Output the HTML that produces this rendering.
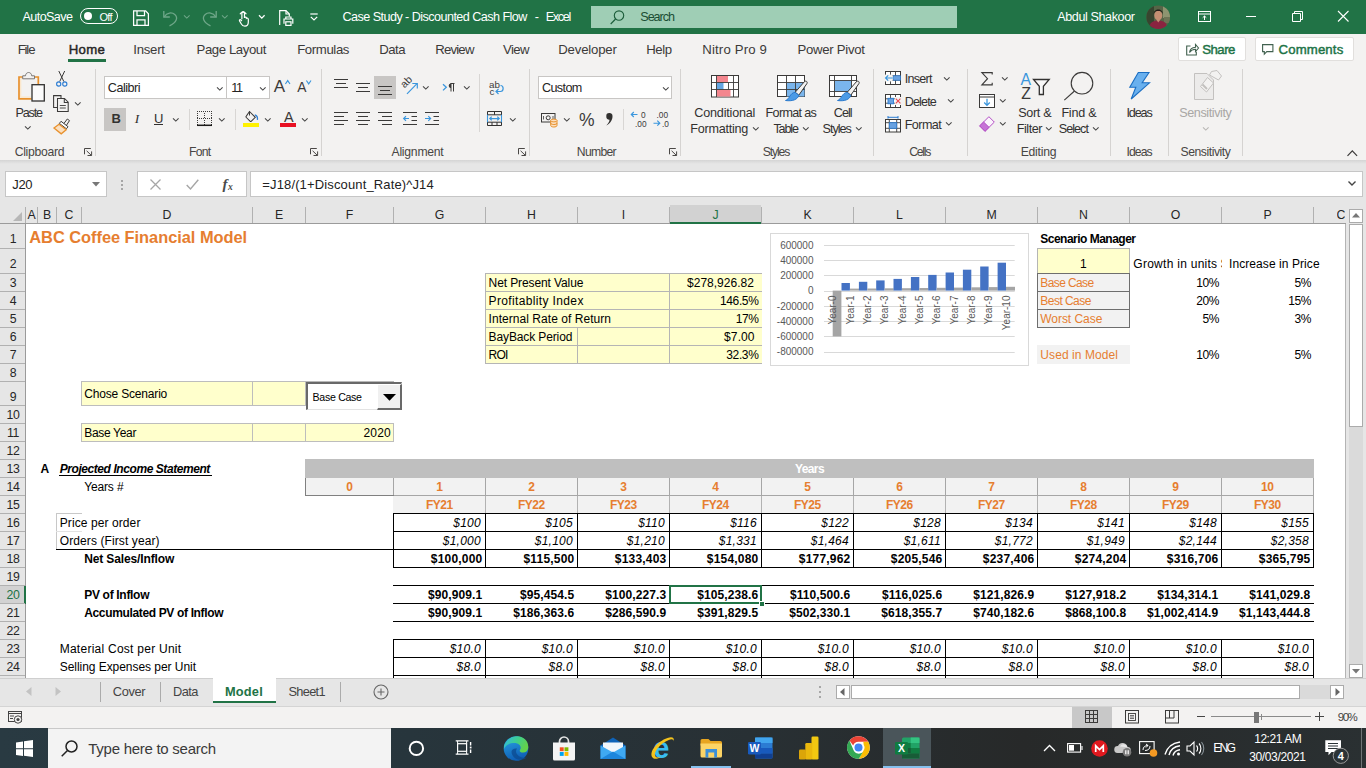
<!DOCTYPE html>
<html><head><meta charset="utf-8"><title>Excel</title>
<style>
*{box-sizing:border-box;margin:0;padding:0}
html,body{width:1366px;height:768px;overflow:hidden;background:#fff;font-family:"Liberation Sans",sans-serif;}
body{position:relative;font-size:12px;color:#252423}
.abs,.t{position:absolute}
.t{white-space:pre;line-height:1}
svg{position:absolute;overflow:visible}
/* title bar */
#title{position:absolute;left:0;top:0;width:1366px;height:34px;background:#217346;color:#fff}
#tabs{position:absolute;left:0;top:34px;width:1366px;height:31px;background:#f3f2f1}
#ribbon{position:absolute;left:0;top:65px;width:1366px;height:95px;background:#f3f2f1}
#ribshadow{position:absolute;left:0;top:160px;width:1366px;height:4px;background:linear-gradient(#d4d4d4,#e6e6e6)}
#fbar{position:absolute;left:0;top:164px;width:1366px;height:43px;background:#e6e6e6}
.tab{position:absolute;top:8px;font-size:13px;color:#3b3a39;white-space:pre;line-height:16px}
.rl{position:absolute;font-size:12.5px;color:#323130;white-space:pre;line-height:16px;text-align:center}
.gl{position:absolute;top:80px;font-size:12px;color:#444;white-space:pre;line-height:14px;text-align:center}
.sep{position:absolute;top:4px;width:1px;height:86px;background:#d2d0ce}
.chev{position:absolute;width:5px;height:5px;border-right:1.2px solid #444;border-bottom:1.2px solid #444;transform:rotate(45deg)}
</style></head><body>
<div id="title"></div>
<span class="t" style="left:22.50px;top:11.00px;font-size:12.6px;color:#fff;letter-spacing:-0.591px;">AutoSave</span>
<div class="abs" style="left:80px;top:8px;width:38px;height:16px;background:transparent;border:1px solid #fff;border-radius:8px"></div>
<div class="abs" style="left:84px;top:12px;width:8px;height:8px;background:#fff;border-radius:4px"></div>
<span class="t" style="left:99.50px;top:12.00px;font-size:11px;color:#fff;letter-spacing:-0.749px;">Off</span>
<svg style="left:133px;top:10px" width="16" height="16" viewBox="0 0 16 16" fill="none" stroke="#fff" stroke-width="1.25"><path d="M.6.900h12l2.800 2.800v11.700H.6z"/><path d="M4 .9v4.600h7.500V.9"/><path d="M4 15.400V9.800h8v5.600"/></svg>
<svg style="left:163px;top:10px" width="15" height="16" viewBox="0 0 15 16" fill="none" stroke="#6fa789" stroke-width="1.3"><path d="M.8 1v6h6"/><path d="M1.200 6.800C4 2.300 9 2 11.800 4.500c3.400 3 2 8-5.300 11.300"/></svg>
<svg style="left:183.7px;top:14.9px" width="5.6" height="3.8" viewBox="0 0 5.6 3.8" fill="none" stroke="#6fa789" stroke-width="1.05"><path d="M0 .3l2.8 2.8 2.8 -2.8"/></svg>
<svg style="left:201.5px;top:10px" width="15" height="16" viewBox="0 0 15 16" fill="none" stroke="#6fa789" stroke-width="1.3"><path d="M14.200 1v6h-6"/><path d="M13.800 6.800C11 2.300 6 2 3.200 4.500-.2 7.500 1.200 12.500 8.500 15.800"/></svg>
<svg style="left:221.7px;top:14.9px" width="5.6" height="3.8" viewBox="0 0 5.6 3.8" fill="none" stroke="#6fa789" stroke-width="1.05"><path d="M0 .3l2.8 2.8 2.8 -2.8"/></svg>
<svg style="left:237.5px;top:10px" width="13" height="17" viewBox="0 0 13 17" fill="none" stroke="#fff" stroke-width="1.4"><g transform="scale(.86 .89)"><path d="M4.500 10.500V3.200a1.500 1.500 0 013 0V9"/><path d="M7.500 8.300c1-.8 2.300-.2 2.300 1 1-.6 2.200 0 2.200 1.100v3.100c0 3-1.500 4.700-4 4.700-2.400 0-3.300-1-4.300-2.800L1.800 12.300c-.6-1.100.7-2 1.600-1.100l1.100 1.300"/><path d="M2.300 4.800a4 4 0 017.400 0"/></g></svg>
<svg style="left:258.6px;top:14.9px" width="5.6" height="3.8" viewBox="0 0 5.6 3.8" fill="none" stroke="#fff" stroke-width="1.3"><path d="M0 .3l2.8 2.8 2.8 -2.8"/></svg>
<svg style="left:279px;top:10px" width="15" height="16" viewBox="0 0 15 16" fill="none" stroke="#fff" stroke-width="1.2"><path d="M.7 15V.7h6.300l3.300 3.300v2.500"/><path d="M7 .7v3.300h3.300"/><path d="M5 13.800V9h8.800v4.800"/><path d="M6.800 9V7h5.200v2"/><rect x="6.800" y="11.800" width="5.200" height="3.600" fill="#217346"/></svg>
<svg style="left:309.5px;top:13px" width="8" height="8" viewBox="0 0 8 8" fill="none" stroke="#fff" stroke-width="1.2"><path d="M.3 1h7.400"/><path d="M.8 3.800l3.200 3.200 3.200-3.200"/></svg>
<span class="t" style="left:342.50px;top:11.00px;font-size:12.6px;color:#fff;letter-spacing:-0.544px;">Case Study - Discounted Cash Flow</span>
<span class="t" style="left:534.80px;top:11.00px;font-size:12.6px;color:#fff;">-</span>
<span class="t" style="left:545.80px;top:11.00px;font-size:12.6px;color:#fff;letter-spacing:-1.327px;">Excel</span>
<div class="abs" style="left:591px;top:6px;width:366px;height:22px;background:#9fceb5;"></div>
<svg style="left:609.8px;top:10px" width="15" height="15" viewBox="0 0 15 15" fill="none" stroke="#1d5e3b" stroke-width="1.15"><circle cx="9" cy="5.500" r="4.700"/><path d="M5.600 9L.7 14"/></svg>
<span class="t" style="left:640.30px;top:11.00px;font-size:12.6px;color:#1b4d33;letter-spacing:-1.043px;">Search</span>
<span class="t" style="left:1057.30px;top:11.00px;font-size:12.6px;color:#fff;letter-spacing:-0.413px;">Abdul Shakoor</span>
<svg style="left:1146px;top:4.5px" width="25" height="25" viewBox="0 0 25 25" ><defs><clipPath id="av"><circle cx="12.200" cy="12.200" r="11.800"/></clipPath></defs><g clip-path="url(#av)"><rect width="25" height="25" fill="#566547"/><rect x="0" y="0" width="8" height="25" fill="#37452f"/><rect x="17" y="0" width="8" height="13" fill="#8d9470"/><rect x="18" y="12" width="7" height="6" fill="#6c7455"/><ellipse cx="12.300" cy="10.500" rx="4" ry="4.800" fill="#c48e72"/><path d="M7.800 9c-.5-6 9.500-6 9 0-1-2.500-2-3-4.500-3S8.800 6.500 7.800 9z" fill="#241c18"/><path d="M3 25c0-7.500 4-9.500 9.300-9.500S21.500 17.500 21.500 25z" fill="#8a2440"/><path d="M10.500 15l1.800 2.500 1.800-2.500z" fill="#c48e72"/></g></svg>
<svg style="left:1198px;top:11px" width="13" height="11" viewBox="0 0 13 11" fill="none" stroke="#fff" stroke-width="1"><rect x=".5" y=".5" width="12" height="10"/><path d="M.5 3h12"/><path d="M6.500 9V5M4.700 6.700L6.500 5l1.800 1.700"/></svg>
<div class="abs" style="left:1246px;top:16px;width:10px;height:1px;background:#fff;"></div>
<svg style="left:1291.5px;top:10.5px" width="11" height="11" viewBox="0 0 11 11" fill="none" stroke="#fff" stroke-width="1"><path d="M.5 2.500h8v8h-8z"/><path d="M2.500 2.500v-2h8v8h-2"/></svg>
<svg style="left:1337.5px;top:11px" width="11" height="11" viewBox="0 0 11 11" fill="none" stroke="#fff" stroke-width="1.1"><path d="M0 0l10.500 10.500M10.500 0L0 10.500"/></svg>
<div id="tabs"></div>
<span class="t" style="left:17.70px;top:43.00px;font-size:13.2px;color:#3b3a39;letter-spacing:-1.155px;">File</span>
<span class="t" style="left:68.70px;top:43.00px;font-size:13.2px;color:#262626;letter-spacing:0.294px;-webkit-text-stroke:0.45px #262626;">Home</span>
<div class="abs" style="left:68px;top:59px;width:38px;height:3px;background:#217346;"></div>
<span class="t" style="left:133.30px;top:43.00px;font-size:13.2px;color:#3b3a39;letter-spacing:-0.263px;">Insert</span>
<span class="t" style="left:196.50px;top:43.00px;font-size:13.2px;color:#3b3a39;letter-spacing:-0.413px;">Page Layout</span>
<span class="t" style="left:297.20px;top:43.00px;font-size:13.2px;color:#3b3a39;letter-spacing:-0.388px;">Formulas</span>
<span class="t" style="left:379.30px;top:43.00px;font-size:13.2px;color:#3b3a39;letter-spacing:-0.564px;">Data</span>
<span class="t" style="left:435.20px;top:43.00px;font-size:13.2px;color:#3b3a39;letter-spacing:-0.804px;">Review</span>
<span class="t" style="left:503.00px;top:43.00px;font-size:13.2px;color:#3b3a39;letter-spacing:-0.635px;">View</span>
<span class="t" style="left:558.20px;top:43.00px;font-size:13.2px;color:#3b3a39;letter-spacing:-0.171px;">Developer</span>
<span class="t" style="left:646.30px;top:43.00px;font-size:13.2px;color:#3b3a39;letter-spacing:-0.484px;">Help</span>
<span class="t" style="left:702.20px;top:43.00px;font-size:13.2px;color:#3b3a39;letter-spacing:0.172px;">Nitro Pro 9</span>
<span class="t" style="left:797.60px;top:43.00px;font-size:13.2px;color:#3b3a39;letter-spacing:-0.302px;">Power Pivot</span>
<div class="abs" style="left:1178px;top:37px;width:68px;height:24px;background:#fff;border:1px solid #e1dfdd;border-radius:2px"></div>
<svg style="left:1185.5px;top:43px" width="13" height="13" viewBox="0 0 13 13" fill="none" stroke="#41614f" stroke-width="1.1"><path d="M4.500 3H.7v9h9.600V8.800"/><path d="M3.500 9.500c.5-3.200 2.500-5 6-5.200V1.500L12.500 5 9.500 8.500V6.200C7 6.300 5 7.200 3.500 9.500z"/></svg>
<span class="t" style="left:1202.20px;top:43.00px;font-size:13.2px;color:#217346;letter-spacing:-0.504px;-webkit-text-stroke:0.45px #217346;">Share</span>
<div class="abs" style="left:1255px;top:37px;width:99px;height:24px;background:#fff;border:1px solid #e1dfdd;border-radius:2px"></div>
<svg style="left:1262px;top:44px" width="12" height="11" viewBox="0 0 12 11" fill="none" stroke="#41614f" stroke-width="1.1"><path d="M.6.600h10.300v7H4.800L2.300 10.200V7.600H.6z"/></svg>
<span class="t" style="left:1278.50px;top:43.00px;font-size:13.2px;color:#217346;letter-spacing:0.140px;-webkit-text-stroke:0.45px #217346;">Comments</span>
<div id="ribbon"></div><div id="ribshadow"></div>
<svg style="left:17px;top:70px" width="30" height="33" viewBox="0 0 30 33" fill="none"><path d="M6 7H2v21.800h12.500" stroke="#e8912d" stroke-width="1.700"/><path d="M17 7h4.300v7" stroke="#e8912d" stroke-width="1.700"/><path d="M6 8.700H3.700v18.400h10.800" stroke="#fce6c8" stroke-width="1.200"/>
<path d="M5.700 8.800V5.800h2.800c.3-4.400 5.900-4.400 6.200 0h2.800v3z" fill="#f3f2f1" stroke="#797775" stroke-width="1"/>
<rect x="15" y="14.700" width="12.300" height="16.300" fill="#fbfbfb" stroke="#323130" stroke-width="1.300"/></svg>
<span class="t" style="left:15.60px;top:107.00px;font-size:12.6px;color:#323130;letter-spacing:-1.205px;">Paste</span>
<svg style="left:25.2px;top:126.4px" width="5.6" height="3.8" viewBox="0 0 5.6 3.8" fill="none" stroke="#444" stroke-width="1.05"><path d="M0 .3l2.8 2.8 2.8 -2.8"/></svg>
<svg style="left:55.5px;top:71px" width="12" height="17" viewBox="0 0 12 17" fill="none"><path d="M2.800 0l5 10.500M8.700 0L3.700 10.500" stroke="#3b3a39" stroke-width="1"/><circle cx="2.700" cy="13" r="2.100" stroke="#2b7cd3" stroke-width="1.100"/><circle cx="8.800" cy="13" r="2.100" stroke="#2b7cd3" stroke-width="1.100"/></svg>
<svg style="left:53px;top:95px" width="17" height="17" viewBox="0 0 17 17" fill="none" stroke="#3b3a39" stroke-width="1.05"><path d="M4.500 12.500H.6V.6h7.400v2.500"/><path d="M4.500 3.500h7l3.700 3.700v9.200H4.500z" fill="#f3f2f1"/><path d="M11.300 3.700v3.800h3.800"/><path d="M6.800 10.500h6M6.800 13h6" stroke-width=".9"/></svg>
<svg style="left:75.4px;top:101.6px" width="5.6" height="3.8" viewBox="0 0 5.6 3.8" fill="none" stroke="#444" stroke-width="1.05"><path d="M0 .3l2.8 2.8 2.8 -2.8"/></svg>
<svg style="left:53px;top:118px" width="18" height="17" viewBox="0 0 18 17" fill="none"><path d="M10.500 6L14.300 1l2.200 1.600-3.500 5.400" stroke="#3b3a39" stroke-width="1" fill="#f3f2f1"/><path d="M8 3.300l7 5.400-1.600 2.100-7-5.400z" fill="#fff" stroke="#3b3a39" stroke-width="1"/><path d="M6 6.300l7.200 5.500-5 4L1 10z" fill="#fbe0c0" stroke="#e8912d" stroke-width="1.300"/></svg>
<span class="t" style="left:14.70px;top:146.00px;font-size:12.2px;color:#484644;letter-spacing:-0.302px;">Clipboard</span>
<svg style="left:84px;top:148px" width="8" height="8" viewBox="0 0 8 8" fill="none" stroke="#4a4846" stroke-width="1"><path d="M.5 6.300V.5h6.300"/><path d="M2.600 2.800l4.800 4.600M3.500 7.500h4.100V3.400"/></svg>
<div class="abs" style="left:95px;top:69px;width:1px;height:87px;background:#d5d3d1;"></div>
<div class="abs" style="left:104px;top:76px;width:123px;height:23px;background:#fff;border:1px solid #c8c6c4"></div>
<span class="t" style="left:107.80px;top:82.00px;font-size:12.6px;color:#252423;letter-spacing:-0.501px;">Calibri</span>
<svg style="left:217.2px;top:86.6px" width="5.6" height="3.8" viewBox="0 0 5.6 3.8" fill="none" stroke="#444" stroke-width="1.05"><path d="M0 .3l2.8 2.8 2.8 -2.8"/></svg>
<div class="abs" style="left:226px;top:76px;width:44px;height:23px;background:#fff;border:1px solid #c8c6c4"></div>
<span class="t" style="left:231.30px;top:82.00px;font-size:12.6px;color:#252423;letter-spacing:-1.300px;">11</span>
<svg style="left:259.7px;top:86.6px" width="5.6" height="3.8" viewBox="0 0 5.6 3.8" fill="none" stroke="#444" stroke-width="1.05"><path d="M0 .3l2.8 2.8 2.8 -2.8"/></svg>
<span class="t" style="left:273.80px;top:78.00px;font-size:17px;color:#3b3a39;">A</span>
<svg style="left:284.5px;top:79.5px" width="6" height="4.5" viewBox="0 0 6 4.5" fill="none" stroke="#3a96dd" stroke-width="1.1"><path d="M.4 4L2.700.6 5 4"/></svg>
<span class="t" style="left:297.20px;top:81.00px;font-size:13.8px;color:#3b3a39;">A</span>
<svg style="left:305.5px;top:80px" width="6" height="4.5" viewBox="0 0 6 4.5" fill="none" stroke="#3a96dd" stroke-width="1.1"><path d="M.4.500L2.700 3.900 5 .5"/></svg>
<div class="abs" style="left:104px;top:108px;width:22px;height:23px;background:#c8c6c4;"></div>
<span class="t" style="left:111.40px;top:112.00px;font-size:13px;color:#323130;font-weight:700;">B</span>
<span class="t" style="left:134.65px;top:112.00px;font-size:13.5px;color:#323130;font-style:italic;font-family:'Liberation Serif',serif;">I</span>
<span class="t" style="left:154.00px;top:112.00px;font-size:13px;color:#323130;">U</span>
<div class="abs" style="left:154px;top:124px;width:9px;height:1px;background:#323130;"></div>
<svg style="left:173.4px;top:117.6px" width="5.6" height="3.8" viewBox="0 0 5.6 3.8" fill="none" stroke="#444" stroke-width="1.05"><path d="M0 .3l2.8 2.8 2.8 -2.8"/></svg>
<div class="abs" style="left:189px;top:109px;width:1px;height:21px;background:#d8d6d4;"></div>
<svg style="left:197px;top:111px" width="16" height="16" viewBox="0 0 16 16" fill="none"><g fill="#3b3a39" stroke="none"><rect x="0" y="0" width="1" height="1"/><rect x="0" y="7" width="1" height="1"/><rect x="2" y="0" width="1" height="1"/><rect x="2" y="7" width="1" height="1"/><rect x="4" y="0" width="1" height="1"/><rect x="4" y="7" width="1" height="1"/><rect x="6" y="0" width="1" height="1"/><rect x="6" y="7" width="1" height="1"/><rect x="8" y="0" width="1" height="1"/><rect x="8" y="7" width="1" height="1"/><rect x="10" y="0" width="1" height="1"/><rect x="10" y="7" width="1" height="1"/><rect x="12" y="0" width="1" height="1"/><rect x="12" y="7" width="1" height="1"/><rect x="14" y="0" width="1" height="1"/><rect x="14" y="7" width="1" height="1"/><rect x="0" y="2" width="1" height="1"/><rect x="7" y="2" width="1" height="1"/><rect x="14" y="2" width="1" height="1"/><rect x="0" y="4" width="1" height="1"/><rect x="7" y="4" width="1" height="1"/><rect x="14" y="4" width="1" height="1"/><rect x="0" y="6" width="1" height="1"/><rect x="7" y="6" width="1" height="1"/><rect x="14" y="6" width="1" height="1"/><rect x="0" y="9" width="1" height="1"/><rect x="7" y="9" width="1" height="1"/><rect x="14" y="9" width="1" height="1"/><rect x="0" y="11" width="1" height="1"/><rect x="7" y="11" width="1" height="1"/><rect x="14" y="11" width="1" height="1"/><rect x="0" y="13" width="1" height="1"/><rect x="7" y="13" width="1" height="1"/><rect x="14" y="13" width="1" height="1"/></g><path d="M0 14.300h15" stroke="#1b1a19" stroke-width="1.500"/></svg>
<svg style="left:219.2px;top:117.6px" width="5.6" height="3.8" viewBox="0 0 5.6 3.8" fill="none" stroke="#444" stroke-width="1.05"><path d="M0 .3l2.8 2.8 2.8 -2.8"/></svg>
<div class="abs" style="left:235px;top:109px;width:1px;height:21px;background:#d8d6d4;"></div>
<svg style="left:244px;top:110px" width="15" height="12" viewBox="0 0 15 12" fill="none"><path d="M5.500 1.500l5.800 5.800-3.900 3.900a1 1 0 01-1.400 0L2.300 7.500a1 1 0 010-1.400z" stroke="#3b3a39" stroke-width="1.050" fill="#f3f2f1"/><path d="M5.500 1.500v4" stroke="#3b3a39"/><path d="M10.800 4.800c2 .6 3 2.500 2.600 5" stroke="#2b7cd3" stroke-width="1.300"/></svg>
<div class="abs" style="left:243px;top:123px;width:16px;height:4px;background:#fff100;"></div>
<svg style="left:265.2px;top:117.6px" width="5.6" height="3.8" viewBox="0 0 5.6 3.8" fill="none" stroke="#444" stroke-width="1.05"><path d="M0 .3l2.8 2.8 2.8 -2.8"/></svg>
<span class="t" style="left:283.90px;top:110.00px;font-size:14.4px;color:#3b3a39;">A</span>
<div class="abs" style="left:280px;top:123px;width:16px;height:4px;background:#e81123;"></div>
<svg style="left:302.2px;top:117.6px" width="5.6" height="3.8" viewBox="0 0 5.6 3.8" fill="none" stroke="#444" stroke-width="1.05"><path d="M0 .3l2.8 2.8 2.8 -2.8"/></svg>
<span class="t" style="left:188.90px;top:146.00px;font-size:12.2px;color:#484644;letter-spacing:-0.704px;">Font</span>
<svg style="left:309.5px;top:148px" width="8" height="8" viewBox="0 0 8 8" fill="none" stroke="#4a4846" stroke-width="1"><path d="M.5 6.300V.5h6.300"/><path d="M2.600 2.800l4.800 4.600M3.500 7.500h4.100V3.400"/></svg>
<div class="abs" style="left:321px;top:69px;width:1px;height:87px;background:#d5d3d1;"></div>
<svg style="left:334px;top:79px" width="16" height="12" viewBox="0 0 16 12" fill="none" stroke="#3b3a39" stroke-width="1"><path d="M0 0.5h14"/><path d="M2 4.5h10"/><path d="M0 8.5h14"/></svg>
<svg style="left:356px;top:83px" width="16" height="12" viewBox="0 0 16 12" fill="none" stroke="#3b3a39" stroke-width="1"><path d="M0 0.5h14"/><path d="M2 4.5h10"/><path d="M0 8.5h14"/></svg>
<div class="abs" style="left:374px;top:76px;width:22px;height:23px;background:#c8c6c4;"></div>
<svg style="left:378px;top:86px" width="16" height="12" viewBox="0 0 16 12" fill="none" stroke="#3b3a39" stroke-width="1"><path d="M0 0.5h14"/><path d="M2 4.5h10"/><path d="M0 8.5h14"/></svg>
<svg style="left:400px;top:77px" width="20" height="19" viewBox="0 0 20 19" fill="none"><text x="0" y="0" font-size="10.500" font-family="Liberation Sans" fill="#3b3a39" stroke="none" transform="translate(4.500 11.500) rotate(-45)">ab</text><path d="M7 16.800L17 6.700" stroke="#3a96dd" stroke-width="1.150"/><path d="M12.300 6.500h5v5" stroke="#3a96dd" stroke-width="1.150"/></svg>
<svg style="left:422.8px;top:86.1px" width="5.6" height="3.8" viewBox="0 0 5.6 3.8" fill="none" stroke="#444" stroke-width="1.05"><path d="M0 .3l2.8 2.8 2.8 -2.8"/></svg>
<svg style="left:442px;top:83px" width="14" height="9" viewBox="0 0 14 9" ><path d="M1 1.200l3.300 3.100L1 7.400" stroke="#3a96dd" stroke-width="1.300" fill="none"/><path d="M9 .5v8M11.500 .5v8M12.500 .5H8.500" stroke="#3b3a39" stroke-width="1" fill="none"/><path d="M9 .5h-.5a2.300 2.300 0 000 4.500H9z" fill="#3b3a39" stroke="none"/></svg>
<svg style="left:463.6px;top:86.1px" width="5.6" height="3.8" viewBox="0 0 5.6 3.8" fill="none" stroke="#444" stroke-width="1.05"><path d="M0 .3l2.8 2.8 2.8 -2.8"/></svg>
<div class="abs" style="left:479px;top:74px;width:1px;height:58px;background:#d8d6d4;"></div>
<svg style="left:488px;top:79px" width="17" height="17" viewBox="0 0 17 17" fill="none"><text x="1" y="8.500" font-size="9.800" font-family="Liberation Sans" fill="#3b3a39" stroke="none">ab</text><text x="1.500" y="15.500" font-size="9.800" font-family="Liberation Sans" fill="#3b3a39" stroke="none">c</text><path d="M12.500 6.500c3.500 0 3.500 6 0 6H8.500" stroke="#3a96dd" stroke-width="1.200"/><path d="M10.500 10l-2.500 2.500 2.500 2.500" stroke="#3a96dd" stroke-width="1.200"/></svg>
<svg style="left:334px;top:112px" width="16" height="16" viewBox="0 0 16 16" fill="none" stroke="#3b3a39" stroke-width="1"><path d="M0 0.5h14"/><path d="M0 4.5h10"/><path d="M0 8.5h14"/><path d="M0 12.5h10"/></svg>
<svg style="left:356px;top:112px" width="16" height="16" viewBox="0 0 16 16" fill="none" stroke="#3b3a39" stroke-width="1"><path d="M0 0.5h14"/><path d="M2 4.5h10"/><path d="M0 8.5h14"/><path d="M2 12.5h10"/></svg>
<svg style="left:378px;top:112px" width="16" height="16" viewBox="0 0 16 16" fill="none" stroke="#3b3a39" stroke-width="1"><path d="M0 0.5h14"/><path d="M4 4.5h10"/><path d="M0 8.5h14"/><path d="M4 12.5h10"/></svg>
<svg style="left:403px;top:112px" width="15" height="13" viewBox="0 0 15 13" fill="none"><path d="M0 .5h14M8.500 4.500h5.500M8.500 8.500h5.500M0 12.500h14" stroke="#3b3a39"/><path d="M6 6.500H.8M3 4.200L.7 6.500 3 8.800" stroke="#3a96dd" stroke-width="1.200"/></svg>
<svg style="left:425px;top:112px" width="15" height="13" viewBox="0 0 15 13" fill="none"><path d="M0 .5h14M8.500 4.500h5.500M8.500 8.500h5.500M0 12.500h14" stroke="#3b3a39"/><path d="M0 6.500h5.500M3.300 4.200l2.300 2.300-2.300 2.300" stroke="#3a96dd" stroke-width="1.200"/></svg>
<svg style="left:487px;top:111px" width="16" height="15" viewBox="0 0 16 15" fill="none"><path d="M.5.500h14v14H.5z" stroke="#323130"/><path d="M.5 3.800h14M.5 11.200h14M7.500.5v3.300M5 11.200v3.300M10 11.200v3.300" stroke="#323130"/><path d="M.5 3.800v7.400M14.500 3.800v7.400" stroke="#3a96dd" stroke-width="1.100"/><path d="M2.800 7.500h9.400M4.700 5.600L2.800 7.500l1.900 1.900M10.300 5.600l1.900 1.900-1.900 1.900" stroke="#3a96dd" stroke-width="1.250"/></svg>
<svg style="left:509.6px;top:117.6px" width="5.6" height="3.8" viewBox="0 0 5.6 3.8" fill="none" stroke="#444" stroke-width="1.05"><path d="M0 .3l2.8 2.8 2.8 -2.8"/></svg>
<span class="t" style="left:391.50px;top:146.00px;font-size:12.2px;color:#484644;letter-spacing:-0.244px;">Alignment</span>
<svg style="left:518px;top:148px" width="8" height="8" viewBox="0 0 8 8" fill="none" stroke="#4a4846" stroke-width="1"><path d="M.5 6.300V.5h6.300"/><path d="M2.600 2.800l4.800 4.600M3.500 7.500h4.100V3.400"/></svg>
<div class="abs" style="left:529px;top:69px;width:1px;height:87px;background:#d5d3d1;"></div>
<div class="abs" style="left:538px;top:76px;width:134px;height:23px;background:#fff;border:1px solid #c8c6c4"></div>
<span class="t" style="left:541.90px;top:82.00px;font-size:12.6px;color:#252423;letter-spacing:-0.601px;">Custom</span>
<svg style="left:662.7px;top:86.6px" width="5.6" height="3.8" viewBox="0 0 5.6 3.8" fill="none" stroke="#444" stroke-width="1.05"><path d="M0 .3l2.8 2.8 2.8 -2.8"/></svg>
<svg style="left:541px;top:113px" width="18" height="15" viewBox="0 0 18 15" fill="none"><rect x=".5" y=".5" width="13.500" height="8.500" stroke="#3b3a39"/><circle cx="7.200" cy="4.800" r="2" stroke="#3b3a39"/><path d="M2.500 3v3.500M12 3v3.500" stroke="#3b3a39" stroke-width=".8"/><path d="M9.700 7.500v5c0 2 6.300 2 6.300 0V7.500" fill="#fbe0c0" stroke="#e8912d"/><ellipse cx="12.850" cy="7.500" rx="3.150" ry="1.400" fill="#fbe0c0" stroke="#e8912d"/><path d="M9.700 10c0 2 6.300 2 6.300 0" stroke="#e8912d"/></svg>
<svg style="left:563.8px;top:117.6px" width="5.6" height="3.8" viewBox="0 0 5.6 3.8" fill="none" stroke="#444" stroke-width="1.05"><path d="M0 .3l2.8 2.8 2.8 -2.8"/></svg>
<span class="t" style="left:579.00px;top:112.00px;font-size:17.5px;color:#3b3a39;">%</span>
<svg style="left:604.5px;top:112.5px" width="9" height="13" viewBox="0 0 9 13" ><path d="M4.300 0a3 3 0 013.200 3.200C7.500 7 5.300 10.500 1.300 12.500c2-2 3.200-4 3.200-5.800A3.300 3.300 0 011.300 3.200 3 3 0 014.300 0z" fill="#323130" stroke="none"/></svg>
<div class="abs" style="left:623px;top:109px;width:1px;height:21px;background:#d8d6d4;"></div>
<svg style="left:630px;top:110px" width="18" height="18" viewBox="0 0 18 18" fill="none"><path d="M7.500 4.500H1.400M3.800 2L1.300 4.500 3.800 7" stroke="#3a96dd" stroke-width="1.150"/><text x="11" y="7.800" font-size="8.300" font-family="Liberation Sans" fill="#3b3a39" stroke="none">0</text><text x="5" y="16.500" font-size="8.300" font-family="Liberation Sans" fill="#3b3a39" stroke="none">.00</text></svg>
<svg style="left:652px;top:110px" width="18" height="18" viewBox="0 0 18 18" fill="none"><text x="4.500" y="7.800" font-size="8.300" font-family="Liberation Sans" fill="#3b3a39" stroke="none">.00</text><path d="M1.500 13.200h6.300M5.300 10.700l2.500 2.500-2.500 2.500" stroke="#3a96dd" stroke-width="1.150"/><text x="10" y="16.500" font-size="8.300" font-family="Liberation Sans" fill="#3b3a39" stroke="none">.0</text></svg>
<span class="t" style="left:576.80px;top:146.00px;font-size:12.2px;color:#484644;letter-spacing:-0.699px;">Number</span>
<svg style="left:668.5px;top:148px" width="8" height="8" viewBox="0 0 8 8" fill="none" stroke="#4a4846" stroke-width="1"><path d="M.5 6.300V.5h6.300"/><path d="M2.600 2.800l4.800 4.600M3.500 7.500h4.100V3.400"/></svg>
<div class="abs" style="left:680px;top:69px;width:1px;height:87px;background:#d5d3d1;"></div>
<svg style="left:711px;top:75px" width="29" height="23" viewBox="0 0 29 23" fill="none"><rect x=".5" y=".5" width="27" height="21.500" fill="#fff" stroke="#3b3a39"/>
<rect x="5.500" y="1" width="11.500" height="6.500" fill="#f3868e"/><rect x="5.500" y="7.500" width="7" height="7" fill="#64a5e1"/><rect x="5.500" y="14.500" width="14" height="7" fill="#f3868e"/>
<path d="M5.500.5v21.500M22.500.5v21.500M.5 7.500h27M.5 14.500h27M17.500 7.500v7" stroke="#3b3a39" stroke-width=".9"/></svg>
<span class="t" style="left:694.30px;top:107.00px;font-size:12.6px;color:#323130;letter-spacing:-0.194px;">Conditional</span>
<span class="t" style="left:690.20px;top:123.00px;font-size:12.6px;color:#323130;letter-spacing:-0.224px;">Formatting</span>
<svg style="left:752.8px;top:126.9px" width="5.6" height="3.8" viewBox="0 0 5.6 3.8" fill="none" stroke="#444" stroke-width="1.05"><path d="M0 .3l2.8 2.8 2.8 -2.8"/></svg>
<svg style="left:777px;top:75px" width="33" height="28" viewBox="0 0 33 28" fill="none"><rect x=".5" y=".5" width="27" height="21" fill="#fff" stroke="#3b3a39"/>
<rect x="9.500" y="7.500" width="18" height="14" fill="#7ab5ec"/>
<path d="M.5 7.500h27M.5 14.500h27M9.500.5v21M18.500.5v21" stroke="#3b3a39" stroke-width=".9"/><path d="M18.200 17.300l9.200-10.600c1.400-1.500 3.600.2 2.500 1.900L21.800 20.200z" fill="#f3f2f1" stroke="#3b3a39" stroke-width="1"/>
<path d="M18.200 17.300l3.600 2.900c-.8 4.300-6.300 6.300-13.300 5.300 4.200-1.300 4.300-7.700 9.700-8.200z" fill="#4a9ae6" stroke="#2274c9" stroke-width=".9"/></svg>
<span class="t" style="left:765.60px;top:107.00px;font-size:12.6px;color:#323130;letter-spacing:-0.677px;">Format as</span>
<span class="t" style="left:773.40px;top:123.00px;font-size:12.6px;color:#323130;letter-spacing:-1.132px;">Table</span>
<svg style="left:802.8px;top:126.9px" width="5.6" height="3.8" viewBox="0 0 5.6 3.8" fill="none" stroke="#444" stroke-width="1.05"><path d="M0 .3l2.8 2.8 2.8 -2.8"/></svg>
<svg style="left:829px;top:75px" width="33" height="28" viewBox="0 0 33 28" fill="none"><rect x=".5" y=".5" width="27" height="21" fill="#fff" stroke="#3b3a39"/>
<rect x="5.500" y="5.500" width="17" height="11" fill="#7ab5ec"/>
<path d="M.5 5.500h27M.5 16.500h27M5.500.5v21M22.500.5v21" stroke="#3b3a39" stroke-width=".9"/><path d="M18.200 17.300l9.200-10.600c1.400-1.500 3.600.2 2.500 1.900L21.800 20.200z" fill="#f3f2f1" stroke="#3b3a39" stroke-width="1"/>
<path d="M18.200 17.300l3.600 2.900c-.8 4.300-6.300 6.300-13.300 5.300 4.200-1.300 4.300-7.700 9.700-8.200z" fill="#4a9ae6" stroke="#2274c9" stroke-width=".9"/></svg>
<span class="t" style="left:833.80px;top:107.00px;font-size:12.6px;color:#323130;letter-spacing:-1.003px;">Cell</span>
<span class="t" style="left:822.60px;top:123.00px;font-size:12.6px;color:#323130;letter-spacing:-1.042px;">Styles</span>
<svg style="left:855.8px;top:126.9px" width="5.6" height="3.8" viewBox="0 0 5.6 3.8" fill="none" stroke="#444" stroke-width="1.05"><path d="M0 .3l2.8 2.8 2.8 -2.8"/></svg>
<span class="t" style="left:762.80px;top:146.00px;font-size:12.2px;color:#484644;letter-spacing:-1.144px;">Styles</span>
<div class="abs" style="left:873px;top:69px;width:1px;height:87px;background:#d5d3d1;"></div>
<svg style="left:885px;top:71px" width="17" height="15" viewBox="0 0 17 15" fill="none"><rect x=".5" y=".5" width="15" height="13" stroke="#3b3a39" fill="#fff"/><path d="M.5 4.800h15M.5 9.200h15M5.500 .5v13M10.500 .5v13" stroke="#3b3a39" stroke-width=".9"/><rect x="8.500" y="4.800" width="7" height="4.400" fill="#6aa2e0" stroke="#2b7cd3" stroke-width=".7"/><rect x="-1" y="3.600" width="8.500" height="6.800" fill="#f3f2f1" stroke="none"/><path d="M8 7H.6M3.200 4.400L.6 7l2.600 2.600" stroke="#3a96dd" stroke-width="1.200"/></svg>
<span class="t" style="left:904.70px;top:73.00px;font-size:12.6px;color:#323130;letter-spacing:-0.723px;">Insert</span>
<svg style="left:943.5px;top:76.6px" width="5.6" height="3.8" viewBox="0 0 5.6 3.8" fill="none" stroke="#444" stroke-width="1.05"><path d="M0 .3l2.8 2.8 2.8 -2.8"/></svg>
<svg style="left:885px;top:94px" width="19" height="15" viewBox="0 0 19 15" fill="none"><rect x=".5" y=".5" width="15" height="13" stroke="#3b3a39" fill="#fff"/><path d="M.5 4.800h15M.5 9.200h15M5.500 .5v13M10.500 .5v13" stroke="#3b3a39" stroke-width=".9"/><rect x="3" y="4.300" width="5.500" height="5.500" fill="#6aa2e0" stroke="#2b7cd3" stroke-width=".9"/><rect x="9.800" y="3" width="7.500" height="8" fill="#f3f2f1" stroke="none"/><path d="M10.800 4.600l4.600 4.800M15.400 4.600l-4.600 4.800" stroke="#e8484f" stroke-width="1.100"/></svg>
<span class="t" style="left:904.70px;top:96.00px;font-size:12.6px;color:#323130;letter-spacing:-0.865px;">Delete</span>
<svg style="left:947.7px;top:99.3px" width="5.6" height="3.8" viewBox="0 0 5.6 3.8" fill="none" stroke="#444" stroke-width="1.05"><path d="M0 .3l2.8 2.8 2.8 -2.8"/></svg>
<svg style="left:885px;top:116px" width="17" height="17" viewBox="0 0 17 17" fill="none"><path d="M3 1.300h10M3 0v2.600M13 0v2.600" stroke="#2b7cd3" stroke-width="1"/><rect x=".5" y="3.500" width="15" height="12.500" stroke="#3b3a39" fill="#fff"/><path d="M.5 6.700h15M.5 12.300h15M4.300 3.500v12.500M11.700 3.500v12.500" stroke="#3b3a39" stroke-width=".9"/><rect x="4.300" y="6.700" width="7.400" height="5.600" fill="#6aa2e0" stroke="#2b7cd3" stroke-width=".8"/></svg>
<span class="t" style="left:904.70px;top:119.00px;font-size:12.6px;color:#323130;letter-spacing:-0.561px;">Format</span>
<svg style="left:945.5px;top:122.3px" width="5.6" height="3.8" viewBox="0 0 5.6 3.8" fill="none" stroke="#444" stroke-width="1.05"><path d="M0 .3l2.8 2.8 2.8 -2.8"/></svg>
<span class="t" style="left:909.20px;top:146.00px;font-size:12.2px;color:#484644;letter-spacing:-1.230px;">Cells</span>
<div class="abs" style="left:967px;top:69px;width:1px;height:87px;background:#d5d3d1;"></div>
<svg style="left:981px;top:71.5px" width="12" height="13.5" viewBox="0 0 12 13.5" fill="none"><path d="M11.200 2.600V.6H.9l5.600 6.100L.9 12.800h10.300v-2" stroke="#3b3a39" stroke-width="1.150"/></svg>
<svg style="left:1001.5px;top:76.5px" width="5.6" height="3.8" viewBox="0 0 5.6 3.8" fill="none" stroke="#444" stroke-width="1.05"><path d="M0 .3l2.8 2.8 2.8 -2.8"/></svg>
<svg style="left:979px;top:94px" width="16" height="14" viewBox="0 0 16 14" fill="none"><rect x=".5" y=".5" width="15" height="13" stroke="#3b3a39" fill="#fff"/><path d="M.5 3h15" stroke="#3b3a39"/><path d="M8 4.800v6.300M5.200 8.500L8 11.400l2.800-2.900" stroke="#3a96dd" stroke-width="1.250"/></svg>
<svg style="left:999.5px;top:99.3px" width="5.6" height="3.8" viewBox="0 0 5.6 3.8" fill="none" stroke="#444" stroke-width="1.05"><path d="M0 .3l2.8 2.8 2.8 -2.8"/></svg>
<svg style="left:979px;top:116px" width="16" height="16" viewBox="0 0 16 16" fill="none"><path d="M9.900 .7l5.400 5.400-9.300 9.200L.7 9.900z" fill="#fbf4fc" stroke="#b44fc6" stroke-width="1"/><path d="M4.600 6l5.400 5.300-4 4L.7 9.900z" fill="#c673d6" stroke="#b44fc6" stroke-width="1"/></svg>
<svg style="left:999.5px;top:122.4px" width="5.6" height="3.8" viewBox="0 0 5.6 3.8" fill="none" stroke="#444" stroke-width="1.05"><path d="M0 .3l2.8 2.8 2.8 -2.8"/></svg>
<svg style="left:1019px;top:71px" width="33" height="30" viewBox="0 0 33 30" fill="none"><text x="1.500" y="13.800" font-size="15.800" font-family="Liberation Sans" fill="#3a96dd" stroke="none">A</text><text x="2.300" y="27.700" font-size="15.800" font-family="Liberation Sans" fill="#3b3a39" stroke="none">Z</text><path d="M14.500 8.500h15.700l-5.800 6.800v8.200h-4.100v-8.200z" stroke="#323130" stroke-width="1.300" fill="#f8f8f8"/></svg>
<span class="t" style="left:1018.20px;top:107.00px;font-size:12.6px;color:#323130;letter-spacing:-0.323px;">Sort &amp;</span>
<span class="t" style="left:1016.70px;top:123.00px;font-size:12.6px;color:#323130;letter-spacing:-0.439px;">Filter</span>
<svg style="left:1045.6px;top:126.9px" width="5.6" height="3.8" viewBox="0 0 5.6 3.8" fill="none" stroke="#444" stroke-width="1.05"><path d="M0 .3l2.8 2.8 2.8 -2.8"/></svg>
<svg style="left:1063px;top:71px" width="32" height="30" viewBox="0 0 32 30" fill="none"><circle cx="19" cy="12.200" r="10.800" stroke="#3b3a39" stroke-width="1.100"/><path d="M11.500 20L1.300 29.200" stroke="#3b3a39" stroke-width="1.100"/></svg>
<span class="t" style="left:1061.40px;top:107.00px;font-size:12.6px;color:#323130;letter-spacing:-0.223px;">Find &amp;</span>
<span class="t" style="left:1058.70px;top:123.00px;font-size:12.6px;color:#323130;letter-spacing:-0.943px;">Select</span>
<svg style="left:1092.6px;top:126.9px" width="5.6" height="3.8" viewBox="0 0 5.6 3.8" fill="none" stroke="#444" stroke-width="1.05"><path d="M0 .3l2.8 2.8 2.8 -2.8"/></svg>
<span class="t" style="left:1020.70px;top:146.00px;font-size:12.2px;color:#484644;letter-spacing:-0.251px;">Editing</span>
<div class="abs" style="left:1110px;top:69px;width:1px;height:87px;background:#d5d3d1;"></div>
<svg style="left:1128px;top:71px" width="24" height="30" viewBox="0 0 24 30" fill="none"><path d="M10.300 1.500h10.700l-6.800 10.300h7.300L3.200 28l4.600-11.700H1.800z" fill="#69b0ee" stroke="#1b6ec2" stroke-width="1.100"/></svg>
<span class="t" style="left:1126.50px;top:107.00px;font-size:12.6px;color:#323130;letter-spacing:-1.155px;">Ideas</span>
<span class="t" style="left:1126.50px;top:146.00px;font-size:12.2px;color:#484644;letter-spacing:-0.910px;">Ideas</span>
<div class="abs" style="left:1168px;top:69px;width:1px;height:87px;background:#d5d3d1;"></div>
<svg style="left:1194px;top:70px" width="29" height="31" viewBox="0 0 29 31" fill="none"><path d="M.5 3.500h12.500l6.500 6.500v19.500H.5z" fill="#ecebea" stroke="#c3c1bf"/><path d="M17.500 1.500l5.500-1 4.500 5.500-3 4-9-5z" fill="#f3f2f1" stroke="#c3c1bf"/><path d="M13.500 7.500l6 5.500-7 9-6-5.500z" fill="#f3f2f1" stroke="#c3c1bf"/><path d="M8.500 14.500l4.500 4.500" stroke="#c3c1bf" stroke-width="2"/></svg>
<span class="t" style="left:1179.20px;top:107.00px;font-size:12.6px;color:#a9a7a5;letter-spacing:-0.401px;">Sensitivity</span>
<svg style="left:1202.8px;top:127.1px" width="5.6" height="3.8" viewBox="0 0 5.6 3.8" fill="none" stroke="#b8b6b4" stroke-width="1.05"><path d="M0 .3l2.8 2.8 2.8 -2.8"/></svg>
<span class="t" style="left:1180.50px;top:146.00px;font-size:12.2px;color:#484644;letter-spacing:-0.451px;">Sensitivity</span>
<div class="abs" style="left:1242px;top:69px;width:1px;height:87px;background:#d5d3d1;"></div>
<svg style="left:1347px;top:150px" width="11" height="6.5" viewBox="0 0 11 6.5" fill="none" stroke="#3b3a39" stroke-width="1.2"><path d="M.5 5.800L5.300.9l4.800 4.900"/></svg>
<div id="fbar"></div>
<div class="abs" style="left:5px;top:171px;width:102px;height:26px;background:#fff;border:1px solid #c6c6c6"></div>
<span class="t" style="left:12.30px;top:178.00px;font-size:13px;color:#222;letter-spacing:-0.378px;">J20</span>
<svg style="left:92px;top:182px" width="8" height="5" viewBox="0 0 8 5" ><path d="M0 0h8L4 4.500z" fill="#777" stroke="none"/></svg>
<div class="abs" style="left:121px;top:180px;width:2px;height:2px;background:#a6a6a6;"></div>
<div class="abs" style="left:121px;top:184px;width:2px;height:2px;background:#a6a6a6;"></div>
<div class="abs" style="left:121px;top:188px;width:2px;height:2px;background:#a6a6a6;"></div>
<div class="abs" style="left:137px;top:171px;width:110px;height:26px;background:#fff;border:1px solid #c6c6c6"></div>
<svg style="left:150px;top:179px" width="11" height="11" viewBox="0 0 11 11" fill="none" stroke="#a6a6a6" stroke-width="1.3"><path d="M.5.500l10 10M10.500.5l-10 10"/></svg>
<svg style="left:186px;top:179px" width="13" height="11" viewBox="0 0 13 11" fill="none" stroke="#a6a6a6" stroke-width="1.4"><path d="M.7 6l3.800 4L12.300.7"/></svg>
<span class="t" style="left:222.50px;top:177.00px;font-size:15px;color:#4a4a4a;font-weight:700;font-style:italic;font-family:'Liberation Serif',serif;">f</span>
<span class="t" style="left:228.12px;top:183.00px;font-size:9.5px;color:#4a4a4a;font-weight:700;font-style:italic;font-family:'Liberation Serif',serif;">x</span>
<div class="abs" style="left:250px;top:171px;width:1113px;height:26px;background:#fff;border:1px solid #c6c6c6"></div>
<span class="t" style="left:262.30px;top:178.00px;font-size:13px;color:#222;letter-spacing:0.137px;">=J18/(1+Discount_Rate)^J14</span>
<svg style="left:1348px;top:181px" width="8" height="6" viewBox="0 0 8 6" fill="none" stroke="#444" stroke-width="1.4"><path d="M.5.500l3.500 3.500L7.500.5"/></svg>
<div class="abs" style="left:0px;top:205px;width:1366px;height:473px;background:#e6e6e6;"></div>
<div class="abs" style="left:26px;top:224px;width:1319px;height:454px;background:#fff;"></div>
<div class="abs" style="left:1345px;top:224px;width:1px;height:454px;background:#b4b4b4;"></div>
<div class="abs" style="left:0px;top:223px;width:1346px;height:1px;background:#9b9b9b;"></div>
<svg style="left:13px;top:211.5px" width="9" height="9" viewBox="0 0 9 9" ><path d="M9 0v9H0z" fill="#b7b7b7" stroke="none"/></svg>
<div class="abs" style="left:25px;top:224px;width:1px;height:454px;background:#9b9b9b;"></div>
<div class="abs" style="left:37px;top:207px;width:1px;height:16px;background:#b1b1b1;"></div>
<span class="t" style="left:27.40px;top:209.00px;font-size:12.3px;color:#262626;">A</span>
<div class="abs" style="left:56px;top:207px;width:1px;height:16px;background:#b1b1b1;"></div>
<span class="t" style="left:42.90px;top:209.00px;font-size:12.3px;color:#262626;">B</span>
<div class="abs" style="left:81px;top:207px;width:1px;height:16px;background:#b1b1b1;"></div>
<span class="t" style="left:64.56px;top:209.00px;font-size:12.3px;color:#262626;">C</span>
<div class="abs" style="left:252px;top:207px;width:1px;height:16px;background:#b1b1b1;"></div>
<span class="t" style="left:162.56px;top:209.00px;font-size:12.3px;color:#262626;">D</span>
<div class="abs" style="left:305px;top:207px;width:1px;height:16px;background:#b1b1b1;"></div>
<span class="t" style="left:274.90px;top:209.00px;font-size:12.3px;color:#262626;">E</span>
<div class="abs" style="left:393px;top:207px;width:1px;height:16px;background:#b1b1b1;"></div>
<span class="t" style="left:345.74px;top:209.00px;font-size:12.3px;color:#262626;">F</span>
<div class="abs" style="left:485px;top:207px;width:1px;height:16px;background:#b1b1b1;"></div>
<span class="t" style="left:434.72px;top:209.00px;font-size:12.3px;color:#262626;">G</span>
<div class="abs" style="left:577px;top:207px;width:1px;height:16px;background:#b1b1b1;"></div>
<span class="t" style="left:527.06px;top:209.00px;font-size:12.3px;color:#262626;">H</span>
<div class="abs" style="left:669px;top:207px;width:1px;height:16px;background:#b1b1b1;"></div>
<span class="t" style="left:621.79px;top:209.00px;font-size:12.3px;color:#262626;">I</span>
<div class="abs" style="left:670px;top:205px;width:91px;height:18px;background:#d2d2d2;"></div>
<div class="abs" style="left:670px;top:222px;width:91px;height:2px;background:#217346;"></div>
<div class="abs" style="left:761px;top:207px;width:1px;height:16px;background:#b1b1b1;"></div>
<span class="t" style="left:712.42px;top:209.00px;font-size:12.3px;color:#217346;">J</span>
<div class="abs" style="left:853px;top:207px;width:1px;height:16px;background:#b1b1b1;"></div>
<span class="t" style="left:803.40px;top:209.00px;font-size:12.3px;color:#262626;">K</span>
<div class="abs" style="left:945px;top:207px;width:1px;height:16px;background:#b1b1b1;"></div>
<span class="t" style="left:896.08px;top:209.00px;font-size:12.3px;color:#262626;">L</span>
<div class="abs" style="left:1037px;top:207px;width:1px;height:16px;background:#b1b1b1;"></div>
<span class="t" style="left:986.38px;top:209.00px;font-size:12.3px;color:#262626;">M</span>
<div class="abs" style="left:1129px;top:207px;width:1px;height:16px;background:#b1b1b1;"></div>
<span class="t" style="left:1079.06px;top:209.00px;font-size:12.3px;color:#262626;">N</span>
<div class="abs" style="left:1221px;top:207px;width:1px;height:16px;background:#b1b1b1;"></div>
<span class="t" style="left:1170.72px;top:209.00px;font-size:12.3px;color:#262626;">O</span>
<div class="abs" style="left:1313px;top:207px;width:1px;height:16px;background:#b1b1b1;"></div>
<span class="t" style="left:1263.40px;top:209.00px;font-size:12.3px;color:#262626;">P</span>
<span class="t" style="left:1336.50px;top:209.00px;font-size:12.3px;color:#262626;width:8.5px;overflow:hidden;">C</span>
<div class="abs" style="left:25px;top:207px;width:1px;height:16px;background:#b1b1b1;"></div>
<div class="abs" style="left:0px;top:248px;width:25px;height:1px;background:#b1b1b1;"></div>
<span class="t" style="left:9.78px;top:233.00px;font-size:12.3px;color:#262626;letter-spacing:-0.300px;">1</span>
<div class="abs" style="left:0px;top:273px;width:25px;height:1px;background:#b1b1b1;"></div>
<span class="t" style="left:9.78px;top:258.00px;font-size:12.3px;color:#262626;letter-spacing:-0.300px;">2</span>
<div class="abs" style="left:0px;top:291px;width:25px;height:1px;background:#b1b1b1;"></div>
<span class="t" style="left:9.78px;top:277.00px;font-size:12.3px;color:#262626;letter-spacing:-0.300px;">3</span>
<div class="abs" style="left:0px;top:309px;width:25px;height:1px;background:#b1b1b1;"></div>
<span class="t" style="left:9.78px;top:295.00px;font-size:12.3px;color:#262626;letter-spacing:-0.300px;">4</span>
<div class="abs" style="left:0px;top:327px;width:25px;height:1px;background:#b1b1b1;"></div>
<span class="t" style="left:9.78px;top:313.00px;font-size:12.3px;color:#262626;letter-spacing:-0.300px;">5</span>
<div class="abs" style="left:0px;top:345px;width:25px;height:1px;background:#b1b1b1;"></div>
<span class="t" style="left:9.78px;top:331.00px;font-size:12.3px;color:#262626;letter-spacing:-0.300px;">6</span>
<div class="abs" style="left:0px;top:363px;width:25px;height:1px;background:#b1b1b1;"></div>
<span class="t" style="left:9.78px;top:349.00px;font-size:12.3px;color:#262626;letter-spacing:-0.300px;">7</span>
<div class="abs" style="left:0px;top:381px;width:25px;height:1px;background:#b1b1b1;"></div>
<span class="t" style="left:9.78px;top:367.00px;font-size:12.3px;color:#262626;letter-spacing:-0.300px;">8</span>
<div class="abs" style="left:0px;top:405px;width:25px;height:1px;background:#b1b1b1;"></div>
<span class="t" style="left:9.78px;top:391.00px;font-size:12.3px;color:#262626;letter-spacing:-0.300px;">9</span>
<div class="abs" style="left:0px;top:423px;width:25px;height:1px;background:#b1b1b1;"></div>
<span class="t" style="left:6.51px;top:409.00px;font-size:12.3px;color:#262626;letter-spacing:-0.300px;">10</span>
<div class="abs" style="left:0px;top:441px;width:25px;height:1px;background:#b1b1b1;"></div>
<span class="t" style="left:6.97px;top:427.00px;font-size:12.3px;color:#262626;letter-spacing:-0.300px;">11</span>
<div class="abs" style="left:0px;top:459px;width:25px;height:1px;background:#b1b1b1;"></div>
<span class="t" style="left:6.51px;top:445.00px;font-size:12.3px;color:#262626;letter-spacing:-0.300px;">12</span>
<div class="abs" style="left:0px;top:477px;width:25px;height:1px;background:#b1b1b1;"></div>
<span class="t" style="left:6.51px;top:463.00px;font-size:12.3px;color:#262626;letter-spacing:-0.300px;">13</span>
<div class="abs" style="left:0px;top:495px;width:25px;height:1px;background:#b1b1b1;"></div>
<span class="t" style="left:6.51px;top:481.00px;font-size:12.3px;color:#262626;letter-spacing:-0.300px;">14</span>
<div class="abs" style="left:0px;top:513px;width:25px;height:1px;background:#b1b1b1;"></div>
<span class="t" style="left:6.51px;top:499.00px;font-size:12.3px;color:#262626;letter-spacing:-0.300px;">15</span>
<div class="abs" style="left:0px;top:531px;width:25px;height:1px;background:#b1b1b1;"></div>
<span class="t" style="left:6.51px;top:517.00px;font-size:12.3px;color:#262626;letter-spacing:-0.300px;">16</span>
<div class="abs" style="left:0px;top:549px;width:25px;height:1px;background:#b1b1b1;"></div>
<span class="t" style="left:6.51px;top:535.00px;font-size:12.3px;color:#262626;letter-spacing:-0.300px;">17</span>
<div class="abs" style="left:0px;top:567px;width:25px;height:1px;background:#b1b1b1;"></div>
<span class="t" style="left:6.51px;top:553.00px;font-size:12.3px;color:#262626;letter-spacing:-0.300px;">18</span>
<div class="abs" style="left:0px;top:585px;width:25px;height:1px;background:#b1b1b1;"></div>
<span class="t" style="left:6.51px;top:571.00px;font-size:12.3px;color:#262626;letter-spacing:-0.300px;">19</span>
<div class="abs" style="left:0px;top:586px;width:25px;height:17px;background:#d2d2d2;"></div>
<div class="abs" style="left:24px;top:586px;width:2px;height:18px;background:#217346;"></div>
<div class="abs" style="left:0px;top:603px;width:25px;height:1px;background:#b1b1b1;"></div>
<span class="t" style="left:6.51px;top:589.00px;font-size:12.3px;color:#217346;letter-spacing:-0.300px;">20</span>
<div class="abs" style="left:0px;top:621px;width:25px;height:1px;background:#b1b1b1;"></div>
<span class="t" style="left:6.51px;top:607.00px;font-size:12.3px;color:#262626;letter-spacing:-0.300px;">21</span>
<div class="abs" style="left:0px;top:639px;width:25px;height:1px;background:#b1b1b1;"></div>
<span class="t" style="left:6.51px;top:625.00px;font-size:12.3px;color:#262626;letter-spacing:-0.300px;">22</span>
<div class="abs" style="left:0px;top:657px;width:25px;height:1px;background:#b1b1b1;"></div>
<span class="t" style="left:6.51px;top:643.00px;font-size:12.3px;color:#262626;letter-spacing:-0.300px;">23</span>
<div class="abs" style="left:0px;top:675px;width:25px;height:1px;background:#b1b1b1;"></div>
<span class="t" style="left:6.51px;top:661.00px;font-size:12.3px;color:#262626;letter-spacing:-0.300px;">24</span>
<div class="abs" style="left:1349px;top:209px;width:14px;height:14px;background:#fff;border:1px solid #ababab"></div>
<svg style="left:1352px;top:213px" width="8" height="5" viewBox="0 0 8 5" ><path d="M0 4.500L4 0l4 4.500z" fill="#777" stroke="none"/></svg>
<div class="abs" style="left:1349px;top:224px;width:14px;height:203px;background:#fff;border:1px solid #ababab"></div>
<div class="abs" style="left:1349px;top:427px;width:14px;height:237px;background:#dadada;"></div>
<div class="abs" style="left:1349px;top:664px;width:14px;height:14px;background:#fff;border:1px solid #ababab"></div>
<svg style="left:1352px;top:669px" width="8" height="5" viewBox="0 0 8 5" ><path d="M0 0h8L4 4.500z" fill="#777" stroke="none"/></svg>
<span class="t" style="left:29.30px;top:229.00px;font-size:16.4px;color:#e67e30;letter-spacing:-0.028px;font-weight:700;">ABC Coffee Financial Model</span>
<span class="t" style="left:1040.30px;top:233.00px;font-size:12px;color:#000;letter-spacing:-0.511px;font-weight:700;">Scenario Manager</span>
<div class="abs" style="left:1037px;top:248px;width:93px;height:26px;background:#ffffcc;border:1px solid #b5b5b5"></div>
<span class="t" style="left:1079.96px;top:258.00px;font-size:12px;color:#000;">1</span>
<span class="t" style="left:1133.30px;top:258.00px;font-size:12px;color:#000;letter-spacing:0.270px;width:88.5px;overflow:hidden;">Growth in units $</span>
<span class="t" style="left:1229.00px;top:258.00px;font-size:12px;color:#000;letter-spacing:0.076px;">Increase in Price</span>
<div class="abs" style="left:1037px;top:273px;width:93px;height:55px;background:#f2f2f2;border:1px solid #6e6e6e"></div>
<div class="abs" style="left:1037px;top:291px;width:93px;height:1px;background:#6e6e6e;"></div>
<div class="abs" style="left:1037px;top:309px;width:93px;height:1px;background:#6e6e6e;"></div>
<span class="t" style="left:1040.30px;top:277.00px;font-size:12px;color:#e67e30;letter-spacing:-0.600px;">Base Case</span>
<span class="t" style="left:1040.30px;top:295.00px;font-size:12px;color:#e67e30;letter-spacing:-0.532px;">Best Case</span>
<span class="t" style="left:1040.30px;top:313.00px;font-size:12px;color:#e67e30;letter-spacing:-0.051px;">Worst Case</span>
<div class="abs" style="left:1037px;top:345px;width:93px;height:19px;background:#f2f2f2;"></div>
<span class="t" style="left:1040.30px;top:349.00px;font-size:12px;color:#e67e30;letter-spacing:0.083px;">Used in Model</span>
<span class="t" style="left:1196.29px;top:277.00px;font-size:12px;color:#000;letter-spacing:-0.500px;">10%</span>
<span class="t" style="left:1294.46px;top:277.00px;font-size:12px;color:#000;letter-spacing:-0.500px;">5%</span>
<span class="t" style="left:1196.29px;top:295.00px;font-size:12px;color:#000;letter-spacing:-0.500px;">20%</span>
<span class="t" style="left:1288.29px;top:295.00px;font-size:12px;color:#000;letter-spacing:-0.500px;">15%</span>
<span class="t" style="left:1202.46px;top:313.00px;font-size:12px;color:#000;letter-spacing:-0.500px;">5%</span>
<span class="t" style="left:1294.46px;top:313.00px;font-size:12px;color:#000;letter-spacing:-0.500px;">3%</span>
<span class="t" style="left:1196.29px;top:349.00px;font-size:12px;color:#000;letter-spacing:-0.500px;">10%</span>
<span class="t" style="left:1294.46px;top:349.00px;font-size:12px;color:#000;letter-spacing:-0.500px;">5%</span>
<div class="abs" style="left:485px;top:273px;width:277px;height:91px;background:#ffffcc;border:1px solid #b5b5b5;border-right:none"></div>
<div class="abs" style="left:485px;top:291px;width:277px;height:1px;background:#b5b5b5;"></div>
<div class="abs" style="left:485px;top:309px;width:277px;height:1px;background:#b5b5b5;"></div>
<div class="abs" style="left:485px;top:327px;width:277px;height:1px;background:#b5b5b5;"></div>
<div class="abs" style="left:485px;top:345px;width:277px;height:1px;background:#b5b5b5;"></div>
<div class="abs" style="left:669px;top:273px;width:1px;height:91px;background:#b5b5b5;"></div>
<div class="abs" style="left:577px;top:327px;width:1px;height:37px;background:#b5b5b5;"></div>
<span class="t" style="left:488.60px;top:277.00px;font-size:12px;color:#000;letter-spacing:-0.107px;">Net Present Value</span>
<span class="t" style="left:488.60px;top:295.00px;font-size:12px;color:#000;letter-spacing:0.358px;">Profitablity Index</span>
<span class="t" style="left:488.60px;top:313.00px;font-size:12px;color:#000;letter-spacing:0.045px;">Internal Rate of Return</span>
<span class="t" style="left:488.60px;top:331.00px;font-size:12px;color:#000;letter-spacing:-0.122px;">BayBack Period</span>
<span class="t" style="left:488.60px;top:349.00px;font-size:12px;color:#000;letter-spacing:-0.818px;">ROI</span>
<span class="t" style="left:687.00px;top:277.00px;font-size:12px;color:#000;letter-spacing:0.017px;">$278,926.82</span>
<span class="t" style="left:720.00px;top:295.00px;font-size:12px;color:#000;letter-spacing:-0.380px;">146.5%</span>
<span class="t" style="left:735.79px;top:313.00px;font-size:12px;color:#000;letter-spacing:-0.500px;">17%</span>
<span class="t" style="left:724.08px;top:331.00px;font-size:12px;color:#000;letter-spacing:0.100px;">$7.00</span>
<span class="t" style="left:726.30px;top:349.00px;font-size:12px;color:#000;letter-spacing:-0.380px;">32.3%</span>
<div class="abs" style="left:81px;top:381px;width:225px;height:25px;background:#ffffcc;border:1px solid #bdbdbd"></div>
<div class="abs" style="left:252px;top:381px;width:1px;height:25px;background:#bdbdbd;"></div>
<span class="t" style="left:84.20px;top:388.00px;font-size:12px;color:#000;letter-spacing:-0.175px;">Chose Scenario</span>
<div class="abs" style="left:81px;top:423px;width:313px;height:19px;background:#ffffcc;border:1px solid #bdbdbd"></div>
<div class="abs" style="left:252px;top:423px;width:1px;height:19px;background:#bdbdbd;"></div>
<div class="abs" style="left:305px;top:423px;width:1px;height:19px;background:#bdbdbd;"></div>
<span class="t" style="left:84.20px;top:427.00px;font-size:12px;color:#000;letter-spacing:-0.315px;">Base Year</span>
<span class="t" style="left:363.60px;top:427.00px;font-size:12px;color:#000;letter-spacing:0.100px;">2020</span>
<div class="abs" style="left:305px;top:381px;width:89px;height:1px;background:#b8b8b8;"></div>
<div class="abs" style="left:306px;top:382px;width:96px;height:28px;background:#fff;border-top:2px solid #696969;border-left:2px solid #696969;border-right:1px solid #e3e3e3;border-bottom:1px solid #e3e3e3"></div>
<div class="abs" style="left:377px;top:384px;width:25px;height:26px;background:#f0f0f0;border-top:1px solid #fff;border-left:1px solid #fff;border-right:2px solid #696969;border-bottom:2px solid #696969"></div>
<svg style="left:383px;top:394px" width="13" height="7" viewBox="0 0 13 7" ><path d="M0 0h13L6.500 6.800z" fill="#000" stroke="none"/></svg>
<span class="t" style="left:312.60px;top:392.00px;font-size:10.6px;color:#000;letter-spacing:-0.307px;">Base Case</span>
<span class="t" style="left:40.40px;top:463.00px;font-size:12px;color:#000;font-weight:700;">A</span>
<span class="t" style="left:59.70px;top:463.00px;font-size:12px;color:#000;letter-spacing:-0.428px;font-weight:700;font-style:italic;">Projected Income Statement</span>
<div class="abs" style="left:59px;top:475px;width:153px;height:1px;background:#000;"></div>
<div class="abs" style="left:305px;top:459px;width:1009px;height:19px;background:#bfbfbf;"></div>
<span class="t" style="left:795.00px;top:463.00px;font-size:12px;color:#fff;letter-spacing:-0.607px;font-weight:700;">Years</span>
<span class="t" style="left:84.20px;top:481.00px;font-size:12px;color:#000;letter-spacing:-0.143px;">Years #</span>
<div class="abs" style="left:305px;top:478px;width:1009px;height:18px;background:#f2f2f2;border-left:1px solid #808080;border-bottom:1px solid #808080"></div>
<div class="abs" style="left:393px;top:496px;width:921px;height:17px;background:#f2f2f2;"></div>
<div class="abs" style="left:393px;top:478px;width:1px;height:18px;background:#a6a6a6;"></div>
<div class="abs" style="left:485px;top:478px;width:1px;height:18px;background:#a6a6a6;"></div>
<div class="abs" style="left:577px;top:478px;width:1px;height:18px;background:#a6a6a6;"></div>
<div class="abs" style="left:669px;top:478px;width:1px;height:18px;background:#a6a6a6;"></div>
<div class="abs" style="left:761px;top:478px;width:1px;height:18px;background:#a6a6a6;"></div>
<div class="abs" style="left:853px;top:478px;width:1px;height:18px;background:#a6a6a6;"></div>
<div class="abs" style="left:945px;top:478px;width:1px;height:18px;background:#a6a6a6;"></div>
<div class="abs" style="left:1037px;top:478px;width:1px;height:18px;background:#a6a6a6;"></div>
<div class="abs" style="left:1129px;top:478px;width:1px;height:18px;background:#a6a6a6;"></div>
<div class="abs" style="left:1221px;top:478px;width:1px;height:18px;background:#a6a6a6;"></div>
<div class="abs" style="left:485px;top:496px;width:1px;height:18px;background:#b2b2b2;"></div>
<div class="abs" style="left:577px;top:496px;width:1px;height:18px;background:#b2b2b2;"></div>
<div class="abs" style="left:669px;top:496px;width:1px;height:18px;background:#b2b2b2;"></div>
<div class="abs" style="left:761px;top:496px;width:1px;height:18px;background:#b2b2b2;"></div>
<div class="abs" style="left:853px;top:496px;width:1px;height:18px;background:#b2b2b2;"></div>
<div class="abs" style="left:945px;top:496px;width:1px;height:18px;background:#b2b2b2;"></div>
<div class="abs" style="left:1037px;top:496px;width:1px;height:18px;background:#b2b2b2;"></div>
<div class="abs" style="left:1129px;top:496px;width:1px;height:18px;background:#b2b2b2;"></div>
<div class="abs" style="left:1221px;top:496px;width:1px;height:18px;background:#b2b2b2;"></div>
<div class="abs" style="left:1313px;top:478px;width:1px;height:36px;background:#a6a6a6;"></div>
<div class="abs" style="left:393px;top:495px;width:921px;height:1px;background:#a6a6a6;"></div>
<div class="abs" style="left:305px;top:495px;width:89px;height:1px;background:#808080;"></div>
<span class="t" style="left:346.16px;top:481.00px;font-size:12px;color:#e67e30;font-weight:700;">0</span>
<span class="t" style="left:436.16px;top:481.00px;font-size:12px;color:#e67e30;letter-spacing:-0.400px;font-weight:700;">1</span>
<span class="t" style="left:425.91px;top:499.00px;font-size:12px;color:#e67e30;letter-spacing:-0.500px;font-weight:700;">FY21</span>
<span class="t" style="left:528.16px;top:481.00px;font-size:12px;color:#e67e30;letter-spacing:-0.400px;font-weight:700;">2</span>
<span class="t" style="left:517.91px;top:499.00px;font-size:12px;color:#e67e30;letter-spacing:-0.500px;font-weight:700;">FY22</span>
<span class="t" style="left:620.16px;top:481.00px;font-size:12px;color:#e67e30;letter-spacing:-0.400px;font-weight:700;">3</span>
<span class="t" style="left:609.91px;top:499.00px;font-size:12px;color:#e67e30;letter-spacing:-0.500px;font-weight:700;">FY23</span>
<span class="t" style="left:712.16px;top:481.00px;font-size:12px;color:#e67e30;letter-spacing:-0.400px;font-weight:700;">4</span>
<span class="t" style="left:701.91px;top:499.00px;font-size:12px;color:#e67e30;letter-spacing:-0.500px;font-weight:700;">FY24</span>
<span class="t" style="left:804.16px;top:481.00px;font-size:12px;color:#e67e30;letter-spacing:-0.400px;font-weight:700;">5</span>
<span class="t" style="left:793.91px;top:499.00px;font-size:12px;color:#e67e30;letter-spacing:-0.500px;font-weight:700;">FY25</span>
<span class="t" style="left:896.16px;top:481.00px;font-size:12px;color:#e67e30;letter-spacing:-0.400px;font-weight:700;">6</span>
<span class="t" style="left:885.91px;top:499.00px;font-size:12px;color:#e67e30;letter-spacing:-0.500px;font-weight:700;">FY26</span>
<span class="t" style="left:988.16px;top:481.00px;font-size:12px;color:#e67e30;letter-spacing:-0.400px;font-weight:700;">7</span>
<span class="t" style="left:977.91px;top:499.00px;font-size:12px;color:#e67e30;letter-spacing:-0.500px;font-weight:700;">FY27</span>
<span class="t" style="left:1080.16px;top:481.00px;font-size:12px;color:#e67e30;letter-spacing:-0.400px;font-weight:700;">8</span>
<span class="t" style="left:1069.91px;top:499.00px;font-size:12px;color:#e67e30;letter-spacing:-0.500px;font-weight:700;">FY28</span>
<span class="t" style="left:1172.16px;top:481.00px;font-size:12px;color:#e67e30;letter-spacing:-0.400px;font-weight:700;">9</span>
<span class="t" style="left:1161.91px;top:499.00px;font-size:12px;color:#e67e30;letter-spacing:-0.500px;font-weight:700;">FY29</span>
<span class="t" style="left:1261.03px;top:481.00px;font-size:12px;color:#e67e30;letter-spacing:-0.400px;font-weight:700;">10</span>
<span class="t" style="left:1253.91px;top:499.00px;font-size:12px;color:#e67e30;letter-spacing:-0.500px;font-weight:700;">FY30</span>
<span class="t" style="left:59.70px;top:517.00px;font-size:12px;color:#000;letter-spacing:0.095px;">Price per order</span>
<span class="t" style="left:59.70px;top:535.00px;font-size:12px;color:#000;letter-spacing:0.105px;">Orders (First year)</span>
<span class="t" style="left:84.20px;top:553.00px;font-size:12px;color:#000;letter-spacing:-0.123px;font-weight:700;">Net Sales/Inflow</span>
<span class="t" style="left:84.20px;top:589.00px;font-size:12px;color:#000;letter-spacing:-0.308px;font-weight:700;">PV of Inflow</span>
<span class="t" style="left:84.20px;top:607.00px;font-size:12px;color:#000;letter-spacing:-0.347px;font-weight:700;">Accumulated PV of Inflow</span>
<span class="t" style="left:59.70px;top:643.00px;font-size:12px;color:#000;letter-spacing:0.255px;">Material Cost per Unit</span>
<span class="t" style="left:59.70px;top:661.00px;font-size:12px;color:#000;letter-spacing:-0.046px;">Selling Expenses per Unit</span>
<div class="abs" style="left:56px;top:513px;width:1px;height:37px;background:#c8c8c8;"></div>
<div class="abs" style="left:56px;top:513px;width:26px;height:1px;background:#c8c8c8;"></div>
<div class="abs" style="left:56px;top:531px;width:26px;height:1px;background:#e2e2e2;"></div>
<span class="t" style="left:453.25px;top:517.00px;font-size:12px;color:#000;letter-spacing:0.250px;font-style:italic;">$100</span>
<span class="t" style="left:545.23px;top:517.00px;font-size:12px;color:#000;letter-spacing:0.250px;font-style:italic;">$105</span>
<span class="t" style="left:638.15px;top:517.00px;font-size:12px;color:#000;letter-spacing:0.250px;font-style:italic;">$110</span>
<span class="t" style="left:730.14px;top:517.00px;font-size:12px;color:#000;letter-spacing:0.250px;font-style:italic;">$116</span>
<span class="t" style="left:821.25px;top:517.00px;font-size:12px;color:#000;letter-spacing:0.250px;font-style:italic;">$122</span>
<span class="t" style="left:913.25px;top:517.00px;font-size:12px;color:#000;letter-spacing:0.250px;font-style:italic;">$128</span>
<span class="t" style="left:1005.25px;top:517.00px;font-size:12px;color:#000;letter-spacing:0.250px;font-style:italic;">$134</span>
<span class="t" style="left:1097.25px;top:517.00px;font-size:12px;color:#000;letter-spacing:0.250px;font-style:italic;">$141</span>
<span class="t" style="left:1189.25px;top:517.00px;font-size:12px;color:#000;letter-spacing:0.250px;font-style:italic;">$148</span>
<span class="t" style="left:1281.23px;top:517.00px;font-size:12px;color:#000;letter-spacing:0.250px;font-style:italic;">$155</span>
<span class="t" style="left:442.74px;top:535.00px;font-size:12px;color:#000;letter-spacing:0.250px;font-style:italic;">$1,000</span>
<span class="t" style="left:534.74px;top:535.00px;font-size:12px;color:#000;letter-spacing:0.250px;font-style:italic;">$1,100</span>
<span class="t" style="left:626.74px;top:535.00px;font-size:12px;color:#000;letter-spacing:0.250px;font-style:italic;">$1,210</span>
<span class="t" style="left:718.74px;top:535.00px;font-size:12px;color:#000;letter-spacing:0.250px;font-style:italic;">$1,331</span>
<span class="t" style="left:810.74px;top:535.00px;font-size:12px;color:#000;letter-spacing:0.250px;font-style:italic;">$1,464</span>
<span class="t" style="left:903.64px;top:535.00px;font-size:12px;color:#000;letter-spacing:0.250px;font-style:italic;">$1,611</span>
<span class="t" style="left:994.74px;top:535.00px;font-size:12px;color:#000;letter-spacing:0.250px;font-style:italic;">$1,772</span>
<span class="t" style="left:1086.74px;top:535.00px;font-size:12px;color:#000;letter-spacing:0.250px;font-style:italic;">$1,949</span>
<span class="t" style="left:1178.74px;top:535.00px;font-size:12px;color:#000;letter-spacing:0.250px;font-style:italic;">$2,144</span>
<span class="t" style="left:1270.74px;top:535.00px;font-size:12px;color:#000;letter-spacing:0.250px;font-style:italic;">$2,358</span>
<span class="t" style="left:430.85px;top:553.00px;font-size:12px;color:#000;letter-spacing:0.200px;font-weight:700;">$100,000</span>
<span class="t" style="left:523.51px;top:553.00px;font-size:12px;color:#000;letter-spacing:0.200px;font-weight:700;">$115,500</span>
<span class="t" style="left:614.85px;top:553.00px;font-size:12px;color:#000;letter-spacing:0.200px;font-weight:700;">$133,403</span>
<span class="t" style="left:706.85px;top:553.00px;font-size:12px;color:#000;letter-spacing:0.200px;font-weight:700;">$154,080</span>
<span class="t" style="left:798.85px;top:553.00px;font-size:12px;color:#000;letter-spacing:0.200px;font-weight:700;">$177,962</span>
<span class="t" style="left:890.85px;top:553.00px;font-size:12px;color:#000;letter-spacing:0.200px;font-weight:700;">$205,546</span>
<span class="t" style="left:982.85px;top:553.00px;font-size:12px;color:#000;letter-spacing:0.200px;font-weight:700;">$237,406</span>
<span class="t" style="left:1074.85px;top:553.00px;font-size:12px;color:#000;letter-spacing:0.200px;font-weight:700;">$274,204</span>
<span class="t" style="left:1166.85px;top:553.00px;font-size:12px;color:#000;letter-spacing:0.200px;font-weight:700;">$316,706</span>
<span class="t" style="left:1258.85px;top:553.00px;font-size:12px;color:#000;letter-spacing:0.200px;font-weight:700;">$365,795</span>
<span class="t" style="left:428.01px;top:589.00px;font-size:12px;color:#000;letter-spacing:0.100px;font-weight:700;">$90,909.1</span>
<span class="t" style="left:520.01px;top:589.00px;font-size:12px;color:#000;letter-spacing:0.100px;font-weight:700;">$95,454.5</span>
<span class="t" style="left:605.24px;top:589.00px;font-size:12px;color:#000;letter-spacing:0.100px;font-weight:700;">$100,227.3</span>
<span class="t" style="left:697.24px;top:589.00px;font-size:12px;color:#000;letter-spacing:0.100px;font-weight:700;">$105,238.6</span>
<span class="t" style="left:789.90px;top:589.00px;font-size:12px;color:#000;letter-spacing:0.100px;font-weight:700;">$110,500.6</span>
<span class="t" style="left:881.90px;top:589.00px;font-size:12px;color:#000;letter-spacing:0.100px;font-weight:700;">$116,025.6</span>
<span class="t" style="left:973.24px;top:589.00px;font-size:12px;color:#000;letter-spacing:0.100px;font-weight:700;">$121,826.9</span>
<span class="t" style="left:1065.24px;top:589.00px;font-size:12px;color:#000;letter-spacing:0.100px;font-weight:700;">$127,918.2</span>
<span class="t" style="left:1157.24px;top:589.00px;font-size:12px;color:#000;letter-spacing:0.100px;font-weight:700;">$134,314.1</span>
<span class="t" style="left:1249.24px;top:589.00px;font-size:12px;color:#000;letter-spacing:0.100px;font-weight:700;">$141,029.8</span>
<span class="t" style="left:428.01px;top:607.00px;font-size:12px;color:#000;letter-spacing:0.100px;font-weight:700;">$90,909.1</span>
<span class="t" style="left:513.24px;top:607.00px;font-size:12px;color:#000;letter-spacing:0.100px;font-weight:700;">$186,363.6</span>
<span class="t" style="left:605.24px;top:607.00px;font-size:12px;color:#000;letter-spacing:0.100px;font-weight:700;">$286,590.9</span>
<span class="t" style="left:697.24px;top:607.00px;font-size:12px;color:#000;letter-spacing:0.100px;font-weight:700;">$391,829.5</span>
<span class="t" style="left:789.24px;top:607.00px;font-size:12px;color:#000;letter-spacing:0.100px;font-weight:700;">$502,330.1</span>
<span class="t" style="left:881.24px;top:607.00px;font-size:12px;color:#000;letter-spacing:0.100px;font-weight:700;">$618,355.7</span>
<span class="t" style="left:973.24px;top:607.00px;font-size:12px;color:#000;letter-spacing:0.100px;font-weight:700;">$740,182.6</span>
<span class="t" style="left:1065.24px;top:607.00px;font-size:12px;color:#000;letter-spacing:0.100px;font-weight:700;">$868,100.8</span>
<span class="t" style="left:1147.03px;top:607.00px;font-size:12px;color:#000;letter-spacing:0.100px;font-weight:700;">$1,002,414.9</span>
<span class="t" style="left:1239.03px;top:607.00px;font-size:12px;color:#000;letter-spacing:0.100px;font-weight:700;">$1,143,444.8</span>
<span class="t" style="left:449.68px;top:643.00px;font-size:12px;color:#000;letter-spacing:0.250px;font-style:italic;">$10.0</span>
<span class="t" style="left:541.68px;top:643.00px;font-size:12px;color:#000;letter-spacing:0.250px;font-style:italic;">$10.0</span>
<span class="t" style="left:633.68px;top:643.00px;font-size:12px;color:#000;letter-spacing:0.250px;font-style:italic;">$10.0</span>
<span class="t" style="left:725.68px;top:643.00px;font-size:12px;color:#000;letter-spacing:0.250px;font-style:italic;">$10.0</span>
<span class="t" style="left:817.68px;top:643.00px;font-size:12px;color:#000;letter-spacing:0.250px;font-style:italic;">$10.0</span>
<span class="t" style="left:909.68px;top:643.00px;font-size:12px;color:#000;letter-spacing:0.250px;font-style:italic;">$10.0</span>
<span class="t" style="left:1001.68px;top:643.00px;font-size:12px;color:#000;letter-spacing:0.250px;font-style:italic;">$10.0</span>
<span class="t" style="left:1093.68px;top:643.00px;font-size:12px;color:#000;letter-spacing:0.250px;font-style:italic;">$10.0</span>
<span class="t" style="left:1185.68px;top:643.00px;font-size:12px;color:#000;letter-spacing:0.250px;font-style:italic;">$10.0</span>
<span class="t" style="left:1277.68px;top:643.00px;font-size:12px;color:#000;letter-spacing:0.250px;font-style:italic;">$10.0</span>
<span class="t" style="left:456.60px;top:661.00px;font-size:12px;color:#000;letter-spacing:0.250px;font-style:italic;">$8.0</span>
<span class="t" style="left:548.60px;top:661.00px;font-size:12px;color:#000;letter-spacing:0.250px;font-style:italic;">$8.0</span>
<span class="t" style="left:640.60px;top:661.00px;font-size:12px;color:#000;letter-spacing:0.250px;font-style:italic;">$8.0</span>
<span class="t" style="left:732.60px;top:661.00px;font-size:12px;color:#000;letter-spacing:0.250px;font-style:italic;">$8.0</span>
<span class="t" style="left:824.60px;top:661.00px;font-size:12px;color:#000;letter-spacing:0.250px;font-style:italic;">$8.0</span>
<span class="t" style="left:916.60px;top:661.00px;font-size:12px;color:#000;letter-spacing:0.250px;font-style:italic;">$8.0</span>
<span class="t" style="left:1008.60px;top:661.00px;font-size:12px;color:#000;letter-spacing:0.250px;font-style:italic;">$8.0</span>
<span class="t" style="left:1100.60px;top:661.00px;font-size:12px;color:#000;letter-spacing:0.250px;font-style:italic;">$8.0</span>
<span class="t" style="left:1192.60px;top:661.00px;font-size:12px;color:#000;letter-spacing:0.250px;font-style:italic;">$8.0</span>
<span class="t" style="left:1284.60px;top:661.00px;font-size:12px;color:#000;letter-spacing:0.250px;font-style:italic;">$8.0</span>
<div class="abs" style="left:393px;top:513px;width:921px;height:1px;background:#000;"></div>
<div class="abs" style="left:393px;top:531px;width:921px;height:1px;background:#000;"></div>
<div class="abs" style="left:393px;top:567px;width:921px;height:1px;background:#000;"></div>
<div class="abs" style="left:56px;top:549px;width:1258px;height:1px;background:#000;"></div>
<div class="abs" style="left:393px;top:513px;width:1px;height:55px;background:#000;"></div>
<div class="abs" style="left:485px;top:513px;width:1px;height:55px;background:#000;"></div>
<div class="abs" style="left:577px;top:513px;width:1px;height:55px;background:#000;"></div>
<div class="abs" style="left:669px;top:513px;width:1px;height:55px;background:#000;"></div>
<div class="abs" style="left:761px;top:513px;width:1px;height:55px;background:#000;"></div>
<div class="abs" style="left:853px;top:513px;width:1px;height:55px;background:#000;"></div>
<div class="abs" style="left:945px;top:513px;width:1px;height:55px;background:#000;"></div>
<div class="abs" style="left:1037px;top:513px;width:1px;height:55px;background:#000;"></div>
<div class="abs" style="left:1129px;top:513px;width:1px;height:55px;background:#000;"></div>
<div class="abs" style="left:1221px;top:513px;width:1px;height:55px;background:#000;"></div>
<div class="abs" style="left:1313px;top:513px;width:1px;height:55px;background:#000;"></div>
<div class="abs" style="left:393px;top:585px;width:921px;height:1px;background:#000;"></div>
<div class="abs" style="left:393px;top:603px;width:921px;height:1px;background:#000;"></div>
<div class="abs" style="left:393px;top:621px;width:921px;height:1px;background:#000;"></div>
<div class="abs" style="left:393px;top:639px;width:921px;height:1px;background:#000;"></div>
<div class="abs" style="left:393px;top:657px;width:921px;height:1px;background:#000;"></div>
<div class="abs" style="left:393px;top:675px;width:921px;height:1px;background:#000;"></div>
<div class="abs" style="left:393px;top:639px;width:1px;height:39px;background:#000;"></div>
<div class="abs" style="left:485px;top:639px;width:1px;height:39px;background:#000;"></div>
<div class="abs" style="left:577px;top:639px;width:1px;height:39px;background:#000;"></div>
<div class="abs" style="left:669px;top:639px;width:1px;height:39px;background:#000;"></div>
<div class="abs" style="left:761px;top:639px;width:1px;height:39px;background:#000;"></div>
<div class="abs" style="left:853px;top:639px;width:1px;height:39px;background:#000;"></div>
<div class="abs" style="left:945px;top:639px;width:1px;height:39px;background:#000;"></div>
<div class="abs" style="left:1037px;top:639px;width:1px;height:39px;background:#000;"></div>
<div class="abs" style="left:1129px;top:639px;width:1px;height:39px;background:#000;"></div>
<div class="abs" style="left:1221px;top:639px;width:1px;height:39px;background:#000;"></div>
<div class="abs" style="left:1313px;top:639px;width:1px;height:39px;background:#000;"></div>
<div class="abs" style="left:669px;top:585px;width:93px;height:19px;background:transparent;border:2px solid #217346"></div>
<div class="abs" style="left:759px;top:601px;width:6px;height:6px;background:#217346;border:1px solid #fff"></div>
<svg style="left:770px;top:233px" width="259" height="133" viewBox="0 0 259 133" ><rect x=".5" y=".5" width="258" height="132" fill="#fff" stroke="#d9d9d9"/><path d="M54.0 12.5H244.7" stroke="#d9d9d9" stroke-width="1"/><text x="43.5" y="15.5" font-size="10" text-anchor="end" fill="#595959" font-family="Liberation Sans">600000</text><path d="M54.0 27.5H244.7" stroke="#d9d9d9" stroke-width="1"/><text x="43.5" y="30.7" font-size="10" text-anchor="end" fill="#595959" font-family="Liberation Sans">400000</text><path d="M54.0 42.5H244.7" stroke="#d9d9d9" stroke-width="1"/><text x="43.5" y="46.0" font-size="10" text-anchor="end" fill="#595959" font-family="Liberation Sans">200000</text><path d="M54.0 58.5H244.7" stroke="#d9d9d9" stroke-width="1"/><text x="43.5" y="61.2" font-size="10" text-anchor="end" fill="#595959" font-family="Liberation Sans">0</text><path d="M54.0 73.5H244.7" stroke="#d9d9d9" stroke-width="1"/><text x="43.5" y="76.5" font-size="10" text-anchor="end" fill="#595959" font-family="Liberation Sans">-200000</text><path d="M54.0 88.5H244.7" stroke="#d9d9d9" stroke-width="1"/><text x="43.5" y="91.7" font-size="10" text-anchor="end" fill="#595959" font-family="Liberation Sans">-400000</text><path d="M54.0 103.5H244.7" stroke="#d9d9d9" stroke-width="1"/><text x="43.5" y="107.0" font-size="10" text-anchor="end" fill="#595959" font-family="Liberation Sans">-600000</text><path d="M54.0 119.5H244.7" stroke="#d9d9d9" stroke-width="1"/><text x="43.5" y="122.2" font-size="10" text-anchor="end" fill="#595959" font-family="Liberation Sans">-800000</text><rect x="62.7" y="57.6" width="8.7" height="45.8" fill="#a5a5a5"/><rect x="71.5" y="50.0" width="8.4" height="7.6" fill="#4472c4"/><rect x="80.0" y="55.6" width="9.0" height="2.0" fill="#a5a5a5"/><rect x="88.9" y="48.8" width="8.4" height="8.8" fill="#4472c4"/><rect x="97.3" y="55.5" width="9.0" height="2.1" fill="#a5a5a5"/><rect x="106.2" y="47.4" width="8.4" height="10.2" fill="#4472c4"/><rect x="114.7" y="55.3" width="9.0" height="2.3" fill="#a5a5a5"/><rect x="123.5" y="45.9" width="8.4" height="11.7" fill="#4472c4"/><rect x="132.0" y="55.2" width="9.0" height="2.4" fill="#a5a5a5"/><rect x="140.9" y="44.0" width="8.4" height="13.6" fill="#4472c4"/><rect x="149.3" y="55.0" width="9.0" height="2.6" fill="#a5a5a5"/><rect x="158.2" y="41.9" width="8.4" height="15.7" fill="#4472c4"/><rect x="166.7" y="54.8" width="9.0" height="2.8" fill="#a5a5a5"/><rect x="175.6" y="39.5" width="8.4" height="18.1" fill="#4472c4"/><rect x="184.0" y="54.6" width="9.0" height="3.0" fill="#a5a5a5"/><rect x="192.9" y="36.7" width="8.4" height="20.9" fill="#4472c4"/><rect x="201.4" y="54.3" width="9.0" height="3.3" fill="#a5a5a5"/><rect x="210.2" y="33.5" width="8.4" height="24.1" fill="#4472c4"/><rect x="218.7" y="54.1" width="9.0" height="3.5" fill="#a5a5a5"/><rect x="227.6" y="29.7" width="8.4" height="27.9" fill="#4472c4"/><rect x="236.0" y="53.8" width="9.0" height="3.8" fill="#a5a5a5"/><text transform="translate(66.3 62.5) rotate(-90)" font-size="10" text-anchor="end" fill="#595959" font-family="Liberation Sans">Year-0</text><text transform="translate(83.6 62.5) rotate(-90)" font-size="10" text-anchor="end" fill="#595959" font-family="Liberation Sans">Year-1</text><text transform="translate(100.9 62.5) rotate(-90)" font-size="10" text-anchor="end" fill="#595959" font-family="Liberation Sans">Year-2</text><text transform="translate(118.3 62.5) rotate(-90)" font-size="10" text-anchor="end" fill="#595959" font-family="Liberation Sans">Year-3</text><text transform="translate(135.6 62.5) rotate(-90)" font-size="10" text-anchor="end" fill="#595959" font-family="Liberation Sans">Year-4</text><text transform="translate(153.0 62.5) rotate(-90)" font-size="10" text-anchor="end" fill="#595959" font-family="Liberation Sans">Year-5</text><text transform="translate(170.3 62.5) rotate(-90)" font-size="10" text-anchor="end" fill="#595959" font-family="Liberation Sans">Year-6</text><text transform="translate(187.6 62.5) rotate(-90)" font-size="10" text-anchor="end" fill="#595959" font-family="Liberation Sans">Year-7</text><text transform="translate(205.0 62.5) rotate(-90)" font-size="10" text-anchor="end" fill="#595959" font-family="Liberation Sans">Year-8</text><text transform="translate(222.3 62.5) rotate(-90)" font-size="10" text-anchor="end" fill="#595959" font-family="Liberation Sans">Year-9</text><text transform="translate(239.6 62.5) rotate(-90)" font-size="10" text-anchor="end" fill="#595959" font-family="Liberation Sans">Year-10</text></svg>
<div class="abs" style="left:0px;top:678px;width:1366px;height:28px;background:#e6e6e6;border-top:1px solid #cfcfcf"></div>
<svg style="left:26px;top:687px" width="6" height="9" viewBox="0 0 6 9" ><path d="M5.500 0v9L0 4.500z" fill="#c3c3c3" stroke="none"/></svg>
<svg style="left:55px;top:687px" width="6" height="9" viewBox="0 0 6 9" ><path d="M.5 0v9L6 4.500z" fill="#c3c3c3" stroke="none"/></svg>
<div class="abs" style="left:100px;top:682px;width:1px;height:20px;background:#ababab;"></div>
<div class="abs" style="left:160px;top:682px;width:1px;height:20px;background:#ababab;"></div>
<div class="abs" style="left:340px;top:682px;width:1px;height:20px;background:#ababab;"></div>
<span class="t" style="left:112.80px;top:686.00px;font-size:12.8px;color:#444;letter-spacing:-0.363px;">Cover</span>
<span class="t" style="left:173.00px;top:686.00px;font-size:12.8px;color:#444;letter-spacing:-0.515px;">Data</span>
<div class="abs" style="left:213px;top:678px;width:63px;height:25px;background:#fff;border-bottom:2px solid #217346"></div>
<span class="t" style="left:225.00px;top:686.00px;font-size:12.8px;color:#217346;letter-spacing:0.180px;font-weight:700;">Model</span>
<span class="t" style="left:288.50px;top:686.00px;font-size:12.8px;color:#444;letter-spacing:-0.693px;">Sheet1</span>
<svg style="left:373px;top:684px" width="16" height="16" viewBox="0 0 16 16" fill="none" stroke="#666" stroke-width="1.1"><circle cx="8" cy="8" r="7"/><path d="M8 4.500v7M4.500 8h7"/></svg>
<div class="abs" style="left:819px;top:686px;width:2px;height:2px;background:#a6a6a6;"></div>
<div class="abs" style="left:819px;top:691px;width:2px;height:2px;background:#a6a6a6;"></div>
<div class="abs" style="left:819px;top:696px;width:2px;height:2px;background:#a6a6a6;"></div>
<div class="abs" style="left:836px;top:685px;width:14px;height:14px;background:#fff;border:1px solid #ababab"></div>
<svg style="left:840px;top:688px" width="5" height="8" viewBox="0 0 5 8" ><path d="M4.500 0v8L0 4z" fill="#666" stroke="none"/></svg>
<div class="abs" style="left:851px;top:685px;width:449px;height:14px;background:#fff;border:1px solid #ababab"></div>
<div class="abs" style="left:1300px;top:685px;width:30px;height:14px;background:#dadada;"></div>
<div class="abs" style="left:1330px;top:685px;width:14px;height:14px;background:#fff;border:1px solid #ababab"></div>
<svg style="left:1335px;top:688px" width="5" height="8" viewBox="0 0 5 8" ><path d="M.5 0v8L5 4z" fill="#666" stroke="none"/></svg>
<div class="abs" style="left:0px;top:706px;width:1366px;height:22px;background:#f3f2f1;border-top:1px solid #d4d4d4"></div>
<svg style="left:8px;top:711px" width="15" height="13" viewBox="0 0 15 13" fill="none"><rect x=".5" y=".5" width="13" height="10" stroke="#444"/><path d="M.5 2.500h13M2 5h4M2 7.500h3" stroke="#444"/><circle cx="10" cy="8.500" r="3.700" fill="#f3f2f1" stroke="#444"/><circle cx="10" cy="8.500" r="1.600" fill="#444" stroke="none"/></svg>
<div class="abs" style="left:1072px;top:707px;width:40px;height:21px;background:#c8c8c8;"></div>
<svg style="left:1085px;top:710px" width="13" height="13" viewBox="0 0 13 13" fill="none" stroke="#3b3a39" stroke-width="1"><rect x=".5" y=".5" width="12" height="12"/><path d="M.5 4.500h12M.5 8.500h12M4.500.5v12M8.500.5v12"/></svg>
<svg style="left:1125px;top:709.5px" width="14" height="14" viewBox="0 0 14 14" fill="none" stroke="#3b3a39" stroke-width="1"><rect x=".5" y=".5" width="13" height="12.500"/><rect x="3.500" y="3.500" width="7" height="7" stroke-width=".9"/><path d="M5 5.500h4M5 7h4M5 8.500h4" stroke-width=".7"/></svg>
<svg style="left:1165px;top:709.5px" width="14" height="14" viewBox="0 0 14 14" fill="none" stroke="#3b3a39" stroke-width="1"><rect x=".5" y=".5" width="13" height="12.500"/><path d="M4.500.5v7.500M9 .5v7.500M.5 8h8.500"/></svg>
<div class="abs" style="left:1197px;top:716px;width:8px;height:1px;background:#444;"></div>
<div class="abs" style="left:1211px;top:716px;width:100px;height:1px;background:#8a8a8a;"></div>
<div class="abs" style="left:1254px;top:712px;width:5px;height:11px;background:#777;"></div>
<div class="abs" style="left:1261px;top:714px;width:1px;height:6px;background:#8a8a8a;"></div>
<div class="abs" style="left:1315px;top:716px;width:9px;height:1px;background:#444;"></div>
<div class="abs" style="left:1319px;top:712px;width:1px;height:9px;background:#444;"></div>
<span class="t" style="left:1337.80px;top:712.00px;font-size:11.5px;color:#444;letter-spacing:-1.506px;">90%</span>
<div class="abs" style="left:0px;top:728px;width:1366px;height:40px;background:#27353c;background:linear-gradient(90deg,#293a42 0%,#27353c 30%,#283034 55%,#272929 75%,#2a3032 100%)"></div>
<svg style="left:16px;top:740px" width="17" height="17" viewBox="0 0 17 17" ><path d="M0 2.400L7 1.400v6.800H0zM8 1.200L17 0v8.200H8zM0 9.200h7v6.800L0 15zM8 9.200h9V17l-9-1.200z" fill="#fff" stroke="none"/></svg>
<div class="abs" style="left:48px;top:728px;width:343px;height:40px;background:#f3f3f3;border-top:1px solid #c9c9c9"></div>
<svg style="left:61px;top:740px" width="17" height="17" viewBox="0 0 17 17" fill="none" stroke="#222" stroke-width="1.5"><circle cx="10.500" cy="6.500" r="5.500"/><path d="M6.500 10.500L.7 16.300"/></svg>
<span class="t" style="left:88.30px;top:741.00px;font-size:15px;color:#3a3a3a;letter-spacing:-0.271px;">Type here to search</span>
<svg style="left:407.5px;top:739.5px" width="17" height="17" viewBox="0 0 17 17" fill="none" stroke="#fff" stroke-width="2"><circle cx="8.400" cy="8.400" r="6.700"/></svg>
<svg style="left:455px;top:740px" width="18" height="16" viewBox="0 0 18 16" fill="none" stroke="#fff" stroke-width="1.2"><rect x="2.600" y="3.700" width="9" height="7.600"/><path d="M.7 .9h12.800M.7 14.100h12.800"/><path d="M2.600 .9v2.800M11.600 .9v2.800M2.600 11.300v2.800M11.600 11.300v2.800" stroke-width="1"/><path d="M15.600 2v3.500M15.600 9.500v3.500" stroke-width="1.400"/><rect x="14.800" y="6.600" width="1.700" height="1.800" fill="#fff" stroke="none"/></svg>
<svg style="left:502.5px;top:735.5px" width="26" height="25" viewBox="0 0 26 25" ><defs><linearGradient id="eg" x1="0" y1="0" x2=".3" y2="1"><stop offset="0" stop-color="#2aa6e6"/><stop offset="1" stop-color="#0f5fb5"/></linearGradient><linearGradient id="eg2" x1="0" y1="0" x2="1" y2=".4"><stop offset="0" stop-color="#2fb8e8"/><stop offset=".55" stop-color="#3fcf8e"/><stop offset="1" stop-color="#63d24b"/></linearGradient></defs>
<circle cx="13" cy="12.500" r="12.300" fill="url(#eg)"/>
<path d="M1 10C3 3.500 9 .2 14.500 .3c6.500.3 11 5 10.800 11.200-.2 3-2.300 5-5.300 5-2.200 0-3.300-.8-3.300-1.800 0-1 1-1.300 1-3 0-2.500-2.500-4.700-6.200-4.700C6.500 7 2.500 9 1 13z" fill="url(#eg2)"/>
<path d="M8.500 15.500c0 5 4.500 8.500 9.500 8.300 2.500-.2 4.500-1 6-2.500-3 1.200-8 .5-10.300-3.500-1-1.800-.8-3.800.3-5.300-3-.5-5.500 1-5.500 3z" fill="#0c4a8f" opacity=".75"/></svg>
<svg style="left:552px;top:735.5px" width="24" height="25" viewBox="0 0 24 25" ><path d="M7.500 7V5.500a4.500 4.500 0 019 0V7" fill="none" stroke="#e4e4e4" stroke-width="1.700"/><path d="M1 6.500h22v16.500a1.500 1.500 0 01-1.500 1.500h-19A1.500 1.500 0 011 23z" fill="#f4f4f4"/><rect x="7.800" y="11.300" width="3.900" height="3.900" fill="#f25022"/><rect x="12.500" y="11.300" width="3.900" height="3.900" fill="#7fba00"/><rect x="7.800" y="16" width="3.900" height="3.900" fill="#00a4ef"/><rect x="12.500" y="16" width="3.900" height="3.900" fill="#ffb900"/></svg>
<svg style="left:600px;top:736.5px" width="26" height="23" viewBox="0 0 26 23" ><path d="M.5 8.500L13 .5l12.500 8v13.500H.5z" fill="#0f63b8"/><path d="M3 8V5.500h20V12L13 17 3 12z" fill="#f1f6fb"/><path d="M.5 8.500L13 15.500l12.500-7v13.500H.5z" fill="#3fa9f2"/><path d="M.5 22L13 14.500 25.500 22z" fill="#1e86dc"/></svg>
<svg style="left:650px;top:734.5px" width="25" height="26" viewBox="0 0 25 26" ><text x="3.200" y="22.800" font-size="29" font-weight="700" font-family="Liberation Sans" fill="#38bdf2">e</text><path d="M2.500 22.500C-1.500 17 7 6.500 17.500 3c4.500-1.500 7.300-.5 6 3.500.3-2.300-1.700-2.600-4.700-1.600C10.500 8 2.800 17 5.500 21.500c1 1.500 3.500 1 6-.2-3.500 2.700-7.500 3.500-9 1.200z" fill="#f4c31d"/></svg>
<svg style="left:699.5px;top:737.5px" width="23" height="20" viewBox="0 0 23 20" ><path d="M.5 2.500A1.500 1.500 0 012 1h6.500l2 2H20.500A1.500 1.500 0 0122 4.500v3H.5z" fill="#e8a520"/><path d="M.5 5.500h21.500v12.500a1.500 1.500 0 01-1.500 1.500h-18.500A1.500 1.500 0 01.5 18z" fill="#fcd466"/><path d="M5.500 11h11.500v8.500h-11.500z" fill="#3b8fd9"/><path d="M8.300 14.500h5.900v5h-5.900z" fill="#fcd466"/></svg>
<div class="abs" style="left:691px;top:766px;width:40px;height:2px;background:#85c0ee;"></div>
<svg style="left:747.5px;top:736.5px" width="25" height="22" viewBox="0 0 25 22" ><rect x="7" y=".5" width="17.500" height="21" rx="1.500" fill="#2b7cd3"/><rect x="7" y=".5" width="17.500" height="5.500" fill="#41a5ee"/><rect x="7" y="11" width="17.500" height="5.500" fill="#185abd"/><rect x="7" y="16.500" width="17.500" height="5" fill="#103f91"/><rect x="0" y="5" width="13" height="12.500" rx="1.300" fill="#185abd"/><text x="6.500" y="15.300" font-size="10.500" font-weight="700" text-anchor="middle" font-family="Liberation Sans" fill="#fff">W</text></svg>
<svg style="left:798.5px;top:736px" width="20" height="24" viewBox="0 0 20 24" ><rect x="12.500" y=".5" width="7" height="23" rx="1.300" fill="#f2c811"/><rect x="6.300" y="7" width="7" height="16.500" rx="1.300" fill="#eab80d"/><rect x="0" y="13.500" width="7" height="10" rx="1.300" fill="#dba509"/></svg>
<svg style="left:846.5px;top:736.3px" width="23" height="23" viewBox="0 0 23 23" ><circle cx="11.500" cy="11.500" r="11.300" fill="#fff"/><path d="M11.500 .2a11.300 11.300 0 019.800 5.650H11.500a5.650 5.650 0 00-5.300 3.700L2.500 4.500A11.300 11.300 0 0111.500 .2z" fill="#ea4335"/><path d="M21.300 5.850a11.300 11.300 0 01-9.300 16.950l4.400-8a5.650 5.650 0 00.3-6.100l-.4-2.850z" fill="#fbbc04"/><path d="M2.400 4.600a11.300 11.300 0 009.500 18.200l4.100-7.100a5.650 5.650 0 01-9.400-1.400z" fill="#34a853"/><circle cx="11.500" cy="11.500" r="5" fill="#fff"/><circle cx="11.500" cy="11.500" r="4" fill="#4285f4"/></svg>
<div class="abs" style="left:883px;top:728px;width:48px;height:40px;background:#4a555a;"></div>
<div class="abs" style="left:883px;top:766px;width:48px;height:2px;background:#85c0ee;"></div>
<svg style="left:894.5px;top:736.5px" width="25" height="22" viewBox="0 0 25 22" ><rect x="7" y=".5" width="17.500" height="21" rx="1.500" fill="#21a366"/><rect x="15.700" y=".5" width="8.800" height="5.500" fill="#33c481"/><rect x="7" y="6" width="8.700" height="5" fill="#107c41"/><rect x="7" y="11" width="17.500" height="5.500" fill="#185c37"/><rect x="15.700" y="11" width="8.800" height="5.500" fill="#107c41"/><rect x="7" y="16.500" width="17.500" height="5" fill="#185c37"/><rect x="0" y="5" width="13" height="12.500" rx="1.300" fill="#107c41"/><text x="6.500" y="15.300" font-size="10.500" font-weight="700" text-anchor="middle" font-family="Liberation Sans" fill="#fff">X</text></svg>
<svg style="left:1043px;top:744px" width="13" height="8" viewBox="0 0 13 8" fill="none" stroke="#fff" stroke-width="1.3"><path d="M1 7l5.500-5.500L12 7"/></svg>
<svg style="left:1067px;top:743px" width="16" height="10" viewBox="0 0 16 10" fill="none" stroke="#fff" stroke-width="1.1"><rect x=".6" y=".6" width="13" height="8.500"/><path d="M15 3v4"/><rect x="2" y="2" width="5" height="5.700" fill="#fff" stroke="none"/></svg>
<svg style="left:1091px;top:739.5px" width="17" height="17" viewBox="0 0 17 17" ><circle cx="8.500" cy="8.500" r="8.300" fill="#e0191f"/><path d="M4.700 12V5.800l3.800 3.800 3.800-3.800V12" fill="none" stroke="#fff" stroke-width="1.700"/></svg>
<svg style="left:1113px;top:742px" width="20" height="15" viewBox="0 0 20 15" ><path d="M4.500 11a3.500 3.500 0 01.5-7 5 5 0 019.500 1A3 3 0 0115 11z" fill="#c8c8c8"/><path d="M7 4.500a4 4 0 017.500.8" fill="#e8e8e8"/><circle cx="14" cy="10.300" r="4.300" fill="#7a7a7a"/><path d="M12.800 8.300v4M15.200 8.300v4" stroke="#fff" stroke-width="1.200"/></svg>
<svg style="left:1139px;top:740px" width="20" height="18" viewBox="0 0 20 18" ><rect x=".6" y="1.600" width="14.500" height="12" fill="none" stroke="#fff" stroke-width="1.100"/><path d="M4 10c0-3 2-4.500 5-4.500M7 4l2 1.500L7 7.500M11 6c0 3-2 4.500-5 4.500" fill="none" stroke="#fff" stroke-width="1"/><circle cx="14.500" cy="13" r="3.800" fill="#f59a23"/></svg>
<svg style="left:1164px;top:741px" width="17" height="15" viewBox="0 0 17 15" fill="none" stroke="#fff" stroke-width="1.4"><path d="M1 13.500C3 6.500 8.500 2 16 1" /><path d="M5 14c1.200-5 5-8.500 11-9.300"/><path d="M9 14.500c.8-3 3-5.200 7-5.700"/><circle cx="14.500" cy="13" r="1.500" fill="#fff" stroke="none"/></svg>
<svg style="left:1186px;top:741px" width="18" height="15" viewBox="0 0 18 15" fill="none" stroke="#fff" stroke-width="1.1"><path d="M1 5h3l4-4v13l-4-4H1z"/><path d="M10.500 4.500c1.500 1.500 1.500 4.500 0 6M13 2.500c2.500 2.500 2.500 7.500 0 10" /><path d="M15.500 1c3 3.500 3 9.500 0 13" stroke="#8a949a"/></svg>
<span class="t" style="left:1213.20px;top:742.00px;font-size:12.2px;color:#fff;letter-spacing:-1.819px;">ENG</span>
<span class="t" style="left:1254.20px;top:733.00px;font-size:12px;color:#fff;letter-spacing:-0.457px;">12:21 AM</span>
<span class="t" style="left:1249.20px;top:751.00px;font-size:12px;color:#fff;letter-spacing:-0.362px;">30/03/2021</span>
<svg style="left:1325px;top:739.5px" width="25" height="25" viewBox="0 0 25 25" ><path d="M.3.300h15.700v11.700h-9.500L3.500 15.300V12H.3z" fill="#fff" stroke="none"/><path d="M3 3.500h10M3 6h10M3 8.500h10" stroke="#2b3336" stroke-width="1.100"/><circle cx="15.800" cy="15.800" r="7.600" fill="#2b3336" stroke="#9a9a9a" stroke-width="1"/><text x="15.800" y="19.800" font-size="11" font-weight="700" text-anchor="middle" font-family="Liberation Sans" fill="#fff">4</text></svg>
<div class="abs" style="left:1361px;top:728px;width:1px;height:40px;background:#6f7476;"></div>
</body></html>
